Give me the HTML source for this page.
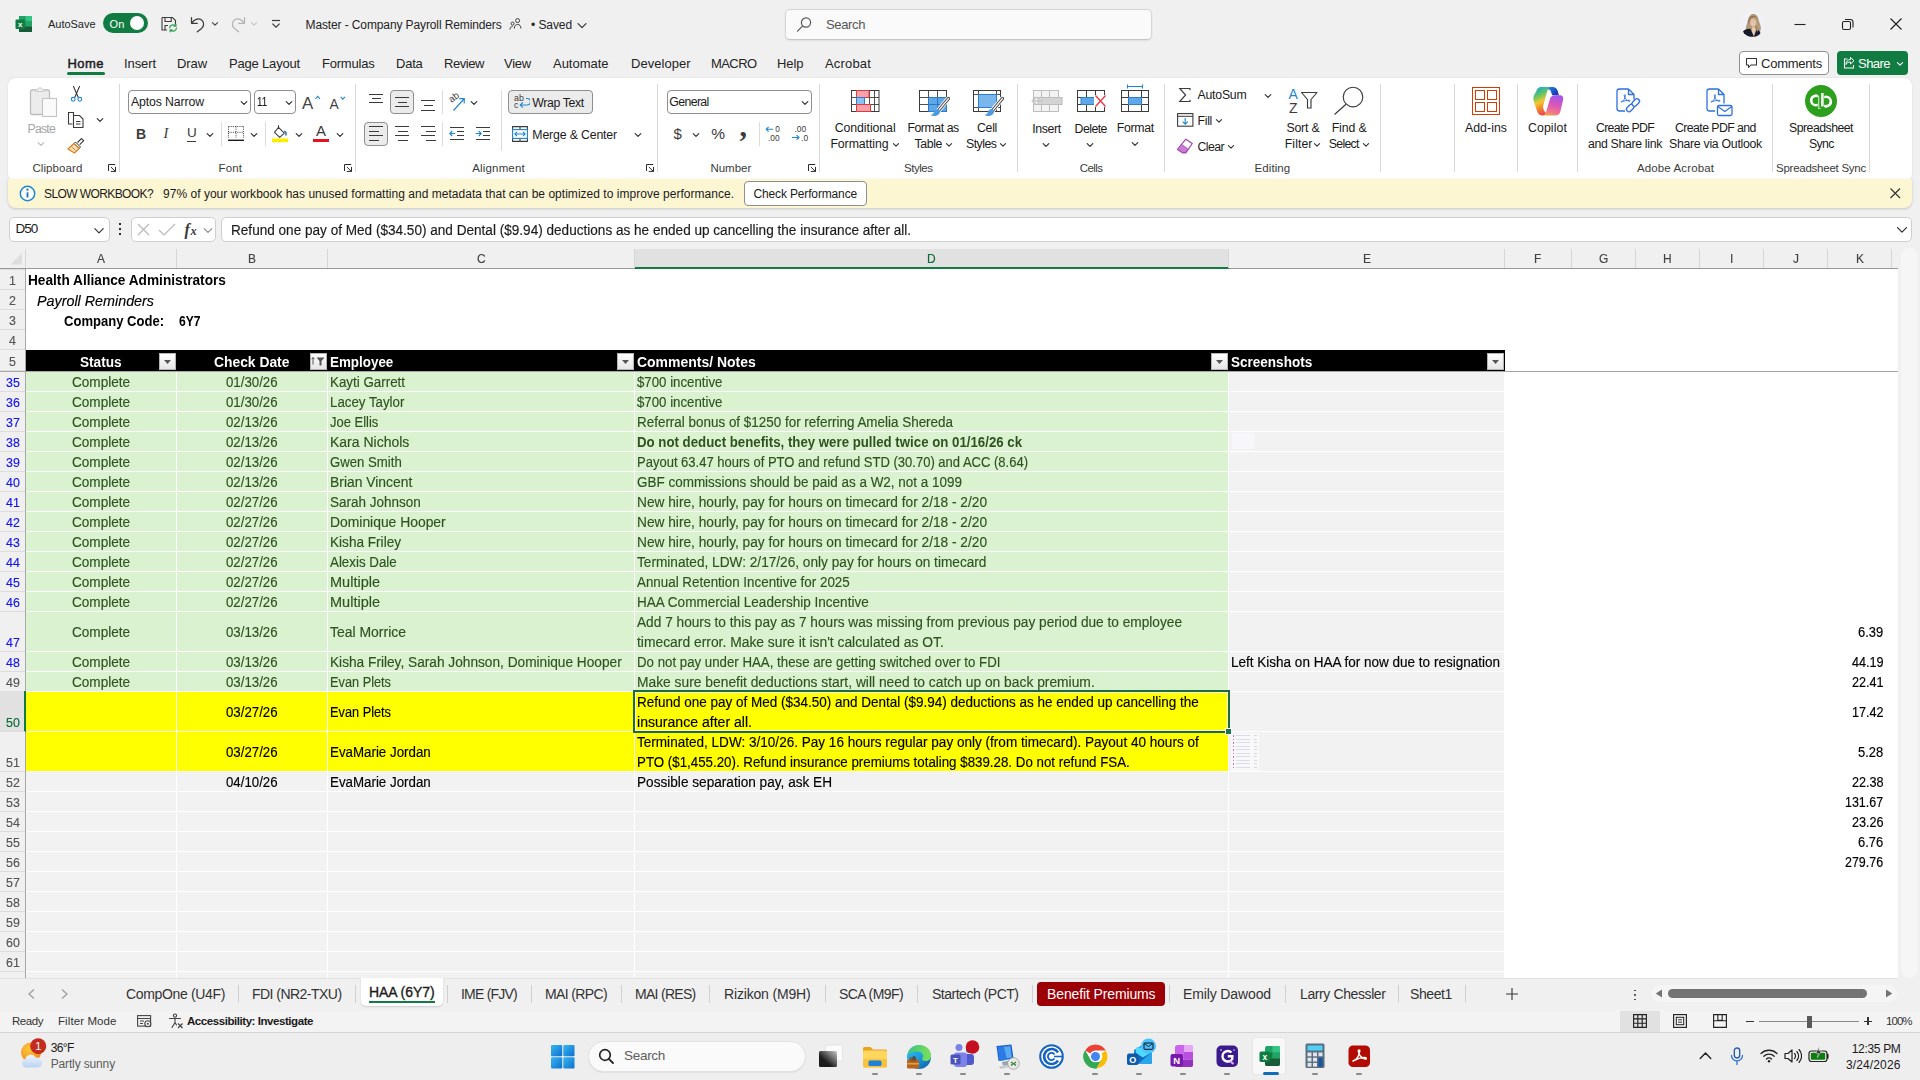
<!DOCTYPE html>
<html lang="en"><head><meta charset="utf-8"><title>Master - Company Payroll Reminders - Excel</title>
<style>
html,body{margin:0;padding:0}
body{width:1920px;height:1080px;position:relative;overflow:hidden;background:#f0f0f0;font-family:"Liberation Sans",sans-serif;color:#242424;font-size:12px}
.t{position:absolute;white-space:pre;display:block}
.r{position:absolute;box-sizing:border-box;display:block}
</style></head><body>
<div class="r" style="left:0px;top:249px;width:1898px;height:729px;background:#ffffff;"></div>
<div class="r" style="left:1898px;top:249px;width:22px;height:729px;background:#f0f0f0;"></div>
<div class="r" style="left:1901px;top:248px;width:17px;height:730px;background:#f6f6f6;border-radius:8.5px;"></div>
<div class="r" style="left:0px;top:249px;width:1898px;height:20px;background:#f0f0f0;border-bottom:1px solid #9a9a9a;"></div>
<div class="r" style="left:635px;top:249px;width:594px;height:20px;background:#e1e1e1;border-bottom:2px solid #107c41;"></div>
<span class="t" style="left:97.01px;top:250.20px;font-size:13.3px;line-height:17px;transform:scaleX(0.9000);transform-origin:0 0;-webkit-text-stroke:0.16px;color:#444;">A</span>
<div class="r" style="left:176px;top:249px;width:1px;height:19px;background:#d6d6d6;"></div>
<span class="t" style="left:248.01px;top:250.20px;font-size:13.3px;line-height:17px;transform:scaleX(0.9000);transform-origin:0 0;-webkit-text-stroke:0.16px;color:#444;">B</span>
<div class="r" style="left:327px;top:249px;width:1px;height:19px;background:#d6d6d6;"></div>
<span class="t" style="left:476.68px;top:250.20px;font-size:13.3px;line-height:17px;transform:scaleX(0.9000);transform-origin:0 0;-webkit-text-stroke:0.16px;color:#444;">C</span>
<div class="r" style="left:634px;top:249px;width:1px;height:19px;background:#d6d6d6;"></div>
<span class="t" style="left:927.18px;top:250.20px;font-size:13.3px;line-height:17px;transform:scaleX(0.9000);transform-origin:0 0;-webkit-text-stroke:0.16px;color:#0e6b38;">D</span>
<div class="r" style="left:1228px;top:249px;width:1px;height:19px;background:#d6d6d6;"></div>
<span class="t" style="left:1362.51px;top:250.20px;font-size:13.3px;line-height:17px;transform:scaleX(0.9000);transform-origin:0 0;-webkit-text-stroke:0.16px;color:#444;">E</span>
<div class="r" style="left:1504px;top:249px;width:1px;height:19px;background:#d6d6d6;"></div>
<span class="t" style="left:1534.34px;top:250.20px;font-size:13.3px;line-height:17px;transform:scaleX(0.9000);transform-origin:0 0;-webkit-text-stroke:0.16px;color:#444;">F</span>
<div class="r" style="left:1571px;top:249px;width:1px;height:19px;background:#d6d6d6;"></div>
<span class="t" style="left:1598.84px;top:250.20px;font-size:13.3px;line-height:17px;transform:scaleX(0.9000);transform-origin:0 0;-webkit-text-stroke:0.16px;color:#444;">G</span>
<div class="r" style="left:1635px;top:249px;width:1px;height:19px;background:#d6d6d6;"></div>
<span class="t" style="left:1663.18px;top:250.20px;font-size:13.3px;line-height:17px;transform:scaleX(0.9000);transform-origin:0 0;-webkit-text-stroke:0.16px;color:#444;">H</span>
<div class="r" style="left:1699px;top:249px;width:1px;height:19px;background:#d6d6d6;"></div>
<span class="t" style="left:1729.84px;top:250.20px;font-size:13.3px;line-height:17px;transform:scaleX(0.9000);transform-origin:0 0;-webkit-text-stroke:0.16px;color:#444;">I</span>
<div class="r" style="left:1763px;top:249px;width:1px;height:19px;background:#d6d6d6;"></div>
<span class="t" style="left:1792.51px;top:250.20px;font-size:13.3px;line-height:17px;transform:scaleX(0.9000);transform-origin:0 0;-webkit-text-stroke:0.16px;color:#444;">J</span>
<div class="r" style="left:1827px;top:249px;width:1px;height:19px;background:#d6d6d6;"></div>
<span class="t" style="left:1855.51px;top:250.20px;font-size:13.3px;line-height:17px;transform:scaleX(0.9000);transform-origin:0 0;-webkit-text-stroke:0.16px;color:#444;">K</span>
<div class="r" style="left:1891px;top:249px;width:1px;height:19px;background:#d6d6d6;"></div>
<div class="r" style="left:25px;top:249px;width:1px;height:19px;background:#d6d6d6;"></div>
<svg class="r" style="left:10px;top:253px;" width="13" height="12" viewBox="0 0 13 12"><path d="M12 0 L12 11.500 L0.700 11.500 Z" fill="#dedede"/></svg>
<div class="r" style="left:0px;top:269px;width:26px;height:709px;background:#f0f0f0;border-right:1px solid #a8a8a8;"></div>
<div class="r" style="left:26px;top:372px;width:1479px;height:606px;background:#f2f2f2;"></div>
<div class="r" style="left:26px;top:372px;width:1203px;height:320px;background:#daf2d0;"></div>
<div class="r" style="left:26px;top:692px;width:1203px;height:80px;background:#ffff00;"></div>
<div class="r" style="left:176px;top:372px;width:1px;height:606px;background:#ffffff;"></div>
<div class="r" style="left:327px;top:372px;width:1px;height:606px;background:#ffffff;"></div>
<div class="r" style="left:634px;top:372px;width:1px;height:606px;background:#ffffff;"></div>
<div class="r" style="left:1228px;top:372px;width:1px;height:606px;background:#ffffff;"></div>
<div class="r" style="left:1504px;top:372px;width:1px;height:606px;background:#ffffff;"></div>
<div class="r" style="left:26px;top:391px;width:1479px;height:1px;background:#ffffff;"></div>
<div class="r" style="left:26px;top:411px;width:1479px;height:1px;background:#ffffff;"></div>
<div class="r" style="left:26px;top:431px;width:1479px;height:1px;background:#ffffff;"></div>
<div class="r" style="left:26px;top:451px;width:1479px;height:1px;background:#ffffff;"></div>
<div class="r" style="left:26px;top:471px;width:1479px;height:1px;background:#ffffff;"></div>
<div class="r" style="left:26px;top:491px;width:1479px;height:1px;background:#ffffff;"></div>
<div class="r" style="left:26px;top:511px;width:1479px;height:1px;background:#ffffff;"></div>
<div class="r" style="left:26px;top:531px;width:1479px;height:1px;background:#ffffff;"></div>
<div class="r" style="left:26px;top:551px;width:1479px;height:1px;background:#ffffff;"></div>
<div class="r" style="left:26px;top:571px;width:1479px;height:1px;background:#ffffff;"></div>
<div class="r" style="left:26px;top:591px;width:1479px;height:1px;background:#ffffff;"></div>
<div class="r" style="left:26px;top:611px;width:1479px;height:1px;background:#ffffff;"></div>
<div class="r" style="left:26px;top:651px;width:1479px;height:1px;background:#ffffff;"></div>
<div class="r" style="left:26px;top:671px;width:1479px;height:1px;background:#ffffff;"></div>
<div class="r" style="left:26px;top:691px;width:1479px;height:1px;background:#ffffff;"></div>
<div class="r" style="left:26px;top:731px;width:1479px;height:1px;background:#ffffff;"></div>
<div class="r" style="left:26px;top:771px;width:1479px;height:1px;background:#ffffff;"></div>
<div class="r" style="left:26px;top:791px;width:1479px;height:1px;background:#ffffff;"></div>
<div class="r" style="left:26px;top:811px;width:1479px;height:1px;background:#ffffff;"></div>
<div class="r" style="left:26px;top:831px;width:1479px;height:1px;background:#ffffff;"></div>
<div class="r" style="left:26px;top:851px;width:1479px;height:1px;background:#ffffff;"></div>
<div class="r" style="left:26px;top:871px;width:1479px;height:1px;background:#ffffff;"></div>
<div class="r" style="left:26px;top:891px;width:1479px;height:1px;background:#ffffff;"></div>
<div class="r" style="left:26px;top:911px;width:1479px;height:1px;background:#ffffff;"></div>
<div class="r" style="left:26px;top:931px;width:1479px;height:1px;background:#ffffff;"></div>
<div class="r" style="left:26px;top:951px;width:1479px;height:1px;background:#ffffff;"></div>
<div class="r" style="left:26px;top:971px;width:1479px;height:1px;background:#ffffff;"></div>
<div class="r" style="left:26px;top:350px;width:1479px;height:21px;background:#000000;"></div>
<div class="r" style="left:0px;top:371px;width:1898px;height:1px;background:#a6a6a6;"></div>
<span class="t" style="left:9.05px;top:271.60px;font-size:12.8px;line-height:17px;transform:scaleX(0.9700);transform-origin:0 0;-webkit-text-stroke:0.16px;color:#555;">1</span>
<div class="r" style="left:0px;top:289px;width:25px;height:1px;background:#dcdcdc;"></div>
<span class="t" style="left:9.05px;top:291.60px;font-size:12.8px;line-height:17px;transform:scaleX(0.9700);transform-origin:0 0;-webkit-text-stroke:0.16px;color:#555;">2</span>
<div class="r" style="left:0px;top:309px;width:25px;height:1px;background:#dcdcdc;"></div>
<span class="t" style="left:9.05px;top:311.60px;font-size:12.8px;line-height:17px;transform:scaleX(0.9700);transform-origin:0 0;-webkit-text-stroke:0.16px;color:#555;">3</span>
<div class="r" style="left:0px;top:329px;width:25px;height:1px;background:#dcdcdc;"></div>
<span class="t" style="left:9.05px;top:331.60px;font-size:12.8px;line-height:17px;transform:scaleX(0.9700);transform-origin:0 0;-webkit-text-stroke:0.16px;color:#555;">4</span>
<div class="r" style="left:0px;top:349px;width:25px;height:1px;background:#dcdcdc;"></div>
<span class="t" style="left:9.05px;top:352.60px;font-size:12.8px;line-height:17px;transform:scaleX(0.9700);transform-origin:0 0;-webkit-text-stroke:0.16px;color:#555;">5</span>
<div class="r" style="left:0px;top:370px;width:25px;height:1px;background:#dcdcdc;"></div>
<span class="t" style="left:5.60px;top:373.60px;font-size:12.8px;line-height:17px;transform:scaleX(0.9700);transform-origin:0 0;-webkit-text-stroke:0.16px;color:#1414f0;">35</span>
<div class="r" style="left:0px;top:391px;width:25px;height:1px;background:#dcdcdc;"></div>
<span class="t" style="left:5.60px;top:393.60px;font-size:12.8px;line-height:17px;transform:scaleX(0.9700);transform-origin:0 0;-webkit-text-stroke:0.16px;color:#1414f0;">36</span>
<div class="r" style="left:0px;top:411px;width:25px;height:1px;background:#dcdcdc;"></div>
<span class="t" style="left:5.60px;top:413.60px;font-size:12.8px;line-height:17px;transform:scaleX(0.9700);transform-origin:0 0;-webkit-text-stroke:0.16px;color:#1414f0;">37</span>
<div class="r" style="left:0px;top:431px;width:25px;height:1px;background:#dcdcdc;"></div>
<span class="t" style="left:5.60px;top:433.60px;font-size:12.8px;line-height:17px;transform:scaleX(0.9700);transform-origin:0 0;-webkit-text-stroke:0.16px;color:#1414f0;">38</span>
<div class="r" style="left:0px;top:451px;width:25px;height:1px;background:#dcdcdc;"></div>
<span class="t" style="left:5.60px;top:453.60px;font-size:12.8px;line-height:17px;transform:scaleX(0.9700);transform-origin:0 0;-webkit-text-stroke:0.16px;color:#1414f0;">39</span>
<div class="r" style="left:0px;top:471px;width:25px;height:1px;background:#dcdcdc;"></div>
<span class="t" style="left:5.60px;top:473.60px;font-size:12.8px;line-height:17px;transform:scaleX(0.9700);transform-origin:0 0;-webkit-text-stroke:0.16px;color:#1414f0;">40</span>
<div class="r" style="left:0px;top:491px;width:25px;height:1px;background:#dcdcdc;"></div>
<span class="t" style="left:5.60px;top:493.60px;font-size:12.8px;line-height:17px;transform:scaleX(0.9700);transform-origin:0 0;-webkit-text-stroke:0.16px;color:#1414f0;">41</span>
<div class="r" style="left:0px;top:511px;width:25px;height:1px;background:#dcdcdc;"></div>
<span class="t" style="left:5.60px;top:513.60px;font-size:12.8px;line-height:17px;transform:scaleX(0.9700);transform-origin:0 0;-webkit-text-stroke:0.16px;color:#1414f0;">42</span>
<div class="r" style="left:0px;top:531px;width:25px;height:1px;background:#dcdcdc;"></div>
<span class="t" style="left:5.60px;top:533.60px;font-size:12.8px;line-height:17px;transform:scaleX(0.9700);transform-origin:0 0;-webkit-text-stroke:0.16px;color:#1414f0;">43</span>
<div class="r" style="left:0px;top:551px;width:25px;height:1px;background:#dcdcdc;"></div>
<span class="t" style="left:5.60px;top:553.60px;font-size:12.8px;line-height:17px;transform:scaleX(0.9700);transform-origin:0 0;-webkit-text-stroke:0.16px;color:#1414f0;">44</span>
<div class="r" style="left:0px;top:571px;width:25px;height:1px;background:#dcdcdc;"></div>
<span class="t" style="left:5.60px;top:573.60px;font-size:12.8px;line-height:17px;transform:scaleX(0.9700);transform-origin:0 0;-webkit-text-stroke:0.16px;color:#1414f0;">45</span>
<div class="r" style="left:0px;top:591px;width:25px;height:1px;background:#dcdcdc;"></div>
<span class="t" style="left:5.60px;top:593.60px;font-size:12.8px;line-height:17px;transform:scaleX(0.9700);transform-origin:0 0;-webkit-text-stroke:0.16px;color:#1414f0;">46</span>
<div class="r" style="left:0px;top:611px;width:25px;height:1px;background:#dcdcdc;"></div>
<span class="t" style="left:5.60px;top:633.60px;font-size:12.8px;line-height:17px;transform:scaleX(0.9700);transform-origin:0 0;-webkit-text-stroke:0.16px;color:#1414f0;">47</span>
<div class="r" style="left:0px;top:651px;width:25px;height:1px;background:#dcdcdc;"></div>
<span class="t" style="left:5.60px;top:653.60px;font-size:12.8px;line-height:17px;transform:scaleX(0.9700);transform-origin:0 0;-webkit-text-stroke:0.16px;color:#1414f0;">48</span>
<div class="r" style="left:0px;top:671px;width:25px;height:1px;background:#dcdcdc;"></div>
<span class="t" style="left:5.60px;top:673.60px;font-size:12.8px;line-height:17px;transform:scaleX(0.9700);transform-origin:0 0;-webkit-text-stroke:0.16px;color:#555;">49</span>
<div class="r" style="left:0px;top:691px;width:25px;height:1px;background:#dcdcdc;"></div>
<div class="r" style="left:0px;top:691px;width:26px;height:41px;background:#e1e1e1;border-right:2px solid #107c41;"></div>
<span class="t" style="left:5.60px;top:713.60px;font-size:12.8px;line-height:17px;transform:scaleX(0.9700);transform-origin:0 0;-webkit-text-stroke:0.16px;color:#0e6b38;">50</span>
<div class="r" style="left:0px;top:731px;width:25px;height:1px;background:#dcdcdc;"></div>
<span class="t" style="left:5.60px;top:753.60px;font-size:12.8px;line-height:17px;transform:scaleX(0.9700);transform-origin:0 0;-webkit-text-stroke:0.16px;color:#555;">51</span>
<div class="r" style="left:0px;top:771px;width:25px;height:1px;background:#dcdcdc;"></div>
<span class="t" style="left:5.60px;top:773.60px;font-size:12.8px;line-height:17px;transform:scaleX(0.9700);transform-origin:0 0;-webkit-text-stroke:0.16px;color:#555;">52</span>
<div class="r" style="left:0px;top:791px;width:25px;height:1px;background:#dcdcdc;"></div>
<span class="t" style="left:5.60px;top:793.60px;font-size:12.8px;line-height:17px;transform:scaleX(0.9700);transform-origin:0 0;-webkit-text-stroke:0.16px;color:#555;">53</span>
<div class="r" style="left:0px;top:811px;width:25px;height:1px;background:#dcdcdc;"></div>
<span class="t" style="left:5.60px;top:813.60px;font-size:12.8px;line-height:17px;transform:scaleX(0.9700);transform-origin:0 0;-webkit-text-stroke:0.16px;color:#555;">54</span>
<div class="r" style="left:0px;top:831px;width:25px;height:1px;background:#dcdcdc;"></div>
<span class="t" style="left:5.60px;top:833.60px;font-size:12.8px;line-height:17px;transform:scaleX(0.9700);transform-origin:0 0;-webkit-text-stroke:0.16px;color:#555;">55</span>
<div class="r" style="left:0px;top:851px;width:25px;height:1px;background:#dcdcdc;"></div>
<span class="t" style="left:5.60px;top:853.60px;font-size:12.8px;line-height:17px;transform:scaleX(0.9700);transform-origin:0 0;-webkit-text-stroke:0.16px;color:#555;">56</span>
<div class="r" style="left:0px;top:871px;width:25px;height:1px;background:#dcdcdc;"></div>
<span class="t" style="left:5.60px;top:873.60px;font-size:12.8px;line-height:17px;transform:scaleX(0.9700);transform-origin:0 0;-webkit-text-stroke:0.16px;color:#555;">57</span>
<div class="r" style="left:0px;top:891px;width:25px;height:1px;background:#dcdcdc;"></div>
<span class="t" style="left:5.60px;top:893.60px;font-size:12.8px;line-height:17px;transform:scaleX(0.9700);transform-origin:0 0;-webkit-text-stroke:0.16px;color:#555;">58</span>
<div class="r" style="left:0px;top:911px;width:25px;height:1px;background:#dcdcdc;"></div>
<span class="t" style="left:5.60px;top:913.60px;font-size:12.8px;line-height:17px;transform:scaleX(0.9700);transform-origin:0 0;-webkit-text-stroke:0.16px;color:#555;">59</span>
<div class="r" style="left:0px;top:931px;width:25px;height:1px;background:#dcdcdc;"></div>
<span class="t" style="left:5.60px;top:933.60px;font-size:12.8px;line-height:17px;transform:scaleX(0.9700);transform-origin:0 0;-webkit-text-stroke:0.16px;color:#555;">60</span>
<div class="r" style="left:0px;top:951px;width:25px;height:1px;background:#dcdcdc;"></div>
<span class="t" style="left:5.60px;top:953.60px;font-size:12.8px;line-height:17px;transform:scaleX(0.9700);transform-origin:0 0;-webkit-text-stroke:0.16px;color:#555;">61</span>
<div class="r" style="left:0px;top:971px;width:25px;height:1px;background:#dcdcdc;"></div>
<div class="r" style="left:0px;top:269px;width:25px;height:1px;background:#dcdcdc;"></div>
<svg class="r" style="left:159px;top:353px;" width="17" height="17" viewBox="0 0 17 17"><defs><linearGradient id="fg" x1="0" y1="0" x2="0" y2="1"><stop offset="0" stop-color="#ffffff"/><stop offset="1" stop-color="#e4e4e4"/></linearGradient></defs><rect x="0.5" y="0.5" width="16" height="16" fill="url(#fg)" stroke="#b5b5b5"/><path d="M5 7h7l-3.5 4z" fill="#555"/></svg>
<svg class="r" style="left:310px;top:353px;" width="17" height="17" viewBox="0 0 17 17"><defs><linearGradient id="fg" x1="0" y1="0" x2="0" y2="1"><stop offset="0" stop-color="#ffffff"/><stop offset="1" stop-color="#e4e4e4"/></linearGradient></defs><rect x="0.5" y="0.5" width="16" height="16" fill="url(#fg)" stroke="#b5b5b5"/><path d="M3 4.5v7M1.6 6.2L3 4.5l1.4 1.7" stroke="#555" fill="none" stroke-width="1"/><path d="M6.5 4.5h8l-3 3.6v4.4h-2v-4.4z" fill="#555"/></svg>
<svg class="r" style="left:617px;top:353px;" width="17" height="17" viewBox="0 0 17 17"><defs><linearGradient id="fg" x1="0" y1="0" x2="0" y2="1"><stop offset="0" stop-color="#ffffff"/><stop offset="1" stop-color="#e4e4e4"/></linearGradient></defs><rect x="0.5" y="0.5" width="16" height="16" fill="url(#fg)" stroke="#b5b5b5"/><path d="M5 7h7l-3.5 4z" fill="#555"/></svg>
<svg class="r" style="left:1211px;top:353px;" width="17" height="17" viewBox="0 0 17 17"><defs><linearGradient id="fg" x1="0" y1="0" x2="0" y2="1"><stop offset="0" stop-color="#ffffff"/><stop offset="1" stop-color="#e4e4e4"/></linearGradient></defs><rect x="0.5" y="0.5" width="16" height="16" fill="url(#fg)" stroke="#b5b5b5"/><path d="M5 7h7l-3.5 4z" fill="#555"/></svg>
<svg class="r" style="left:1487px;top:353px;" width="17" height="17" viewBox="0 0 17 17"><defs><linearGradient id="fg" x1="0" y1="0" x2="0" y2="1"><stop offset="0" stop-color="#ffffff"/><stop offset="1" stop-color="#e4e4e4"/></linearGradient></defs><rect x="0.5" y="0.5" width="16" height="16" fill="url(#fg)" stroke="#b5b5b5"/><path d="M5 7h7l-3.5 4z" fill="#555"/></svg>
<span class="t" style="left:80.20px;top:352.60px;font-size:14px;line-height:18px;transform:scaleX(0.9723);transform-origin:0 0;color:#fff;font-weight:bold;">Status</span>
<span class="t" style="left:214.30px;top:352.60px;font-size:14px;line-height:18px;transform:scaleX(0.9889);transform-origin:0 0;color:#fff;font-weight:bold;">Check Date</span>
<span class="t" style="left:330.00px;top:352.60px;font-size:14px;line-height:18px;transform:scaleX(0.9571);transform-origin:0 0;color:#fff;font-weight:bold;">Employee</span>
<span class="t" style="left:637.30px;top:352.60px;font-size:14px;line-height:18px;transform:scaleX(0.9974);transform-origin:0 0;color:#fff;font-weight:bold;">Comments/ Notes</span>
<span class="t" style="left:1231.00px;top:352.60px;font-size:14px;line-height:18px;transform:scaleX(0.9663);transform-origin:0 0;color:#fff;font-weight:bold;">Screenshots</span>
<span class="t" style="left:28.10px;top:270.50px;font-size:14.5px;line-height:19px;transform:scaleX(0.9423);transform-origin:0 0;color:#000;font-weight:bold;">Health Alliance Administrators</span>
<span class="t" style="left:37.00px;top:290.50px;font-size:15.5px;line-height:20px;transform:scaleX(0.9240);transform-origin:0 0;-webkit-text-stroke:0.16px;color:#000;font-style:italic;">Payroll Reminders</span>
<span class="t" style="left:64.40px;top:312.00px;font-size:14px;line-height:18px;transform:scaleX(0.9317);transform-origin:0 0;color:#000;font-weight:bold;">Company Code:</span>
<span class="t" style="left:178.50px;top:312.00px;font-size:14px;line-height:18px;transform:scaleX(0.8631);transform-origin:0 0;color:#000;font-weight:bold;">6Y7</span>
<span class="t" style="left:71.95px;top:373.20px;font-size:14px;line-height:18px;transform:scaleX(0.9697);transform-origin:0 0;-webkit-text-stroke:0.16px;color:#2f5320;">Complete</span>
<span class="t" style="left:225.70px;top:373.20px;font-size:14px;line-height:18px;transform:scaleX(0.9470);transform-origin:0 0;-webkit-text-stroke:0.16px;color:#2f5320;">01/30/26</span>
<span class="t" style="left:330.00px;top:373.20px;font-size:14px;line-height:18px;transform:scaleX(0.9545);transform-origin:0 0;-webkit-text-stroke:0.16px;color:#2f5320;">Kayti Garrett</span>
<span class="t" style="left:637.30px;top:373.20px;font-size:14px;line-height:18px;transform:scaleX(0.9459);transform-origin:0 0;-webkit-text-stroke:0.16px;color:#2f5320;">$700 incentive</span>
<span class="t" style="left:71.95px;top:393.20px;font-size:14px;line-height:18px;transform:scaleX(0.9697);transform-origin:0 0;-webkit-text-stroke:0.16px;color:#2f5320;">Complete</span>
<span class="t" style="left:225.70px;top:393.20px;font-size:14px;line-height:18px;transform:scaleX(0.9470);transform-origin:0 0;-webkit-text-stroke:0.16px;color:#2f5320;">01/30/26</span>
<span class="t" style="left:330.00px;top:393.20px;font-size:14px;line-height:18px;transform:scaleX(0.9485);transform-origin:0 0;-webkit-text-stroke:0.16px;color:#2f5320;">Lacey Taylor</span>
<span class="t" style="left:637.30px;top:393.20px;font-size:14px;line-height:18px;transform:scaleX(0.9459);transform-origin:0 0;-webkit-text-stroke:0.16px;color:#2f5320;">$700 incentive</span>
<span class="t" style="left:71.95px;top:413.20px;font-size:14px;line-height:18px;transform:scaleX(0.9697);transform-origin:0 0;-webkit-text-stroke:0.16px;color:#2f5320;">Complete</span>
<span class="t" style="left:225.70px;top:413.20px;font-size:14px;line-height:18px;transform:scaleX(0.9470);transform-origin:0 0;-webkit-text-stroke:0.16px;color:#2f5320;">02/13/26</span>
<span class="t" style="left:330.00px;top:413.20px;font-size:14px;line-height:18px;transform:scaleX(0.9265);transform-origin:0 0;-webkit-text-stroke:0.16px;color:#2f5320;">Joe Ellis</span>
<span class="t" style="left:637.30px;top:413.20px;font-size:14px;line-height:18px;transform:scaleX(0.9600);transform-origin:0 0;-webkit-text-stroke:0.16px;color:#2f5320;">Referral bonus of $1250 for referring Amelia Shereda</span>
<span class="t" style="left:71.95px;top:433.20px;font-size:14px;line-height:18px;transform:scaleX(0.9697);transform-origin:0 0;-webkit-text-stroke:0.16px;color:#2f5320;">Complete</span>
<span class="t" style="left:225.70px;top:433.20px;font-size:14px;line-height:18px;transform:scaleX(0.9470);transform-origin:0 0;-webkit-text-stroke:0.16px;color:#2f5320;">02/13/26</span>
<span class="t" style="left:330.00px;top:433.20px;font-size:14px;line-height:18px;transform:scaleX(0.9992);transform-origin:0 0;-webkit-text-stroke:0.16px;color:#2f5320;">Kara Nichols</span>
<span class="t" style="left:637.30px;top:433.20px;font-size:14px;line-height:18px;transform:scaleX(0.9463);transform-origin:0 0;color:#2f5320;font-weight:bold;">Do not deduct benefits, they were pulled twice on 01/16/26 ck</span>
<span class="t" style="left:71.95px;top:453.20px;font-size:14px;line-height:18px;transform:scaleX(0.9697);transform-origin:0 0;-webkit-text-stroke:0.16px;color:#2f5320;">Complete</span>
<span class="t" style="left:225.70px;top:453.20px;font-size:14px;line-height:18px;transform:scaleX(0.9470);transform-origin:0 0;-webkit-text-stroke:0.16px;color:#2f5320;">02/13/26</span>
<span class="t" style="left:330.00px;top:453.20px;font-size:14px;line-height:18px;transform:scaleX(0.9404);transform-origin:0 0;-webkit-text-stroke:0.16px;color:#2f5320;">Gwen Smith</span>
<span class="t" style="left:637.30px;top:453.20px;font-size:14px;line-height:18px;transform:scaleX(0.9293);transform-origin:0 0;-webkit-text-stroke:0.16px;color:#2f5320;">Payout 63.47 hours of PTO and refund STD (30.70) and ACC (8.64)</span>
<span class="t" style="left:71.95px;top:473.20px;font-size:14px;line-height:18px;transform:scaleX(0.9697);transform-origin:0 0;-webkit-text-stroke:0.16px;color:#2f5320;">Complete</span>
<span class="t" style="left:225.70px;top:473.20px;font-size:14px;line-height:18px;transform:scaleX(0.9470);transform-origin:0 0;-webkit-text-stroke:0.16px;color:#2f5320;">02/13/26</span>
<span class="t" style="left:330.00px;top:473.20px;font-size:14px;line-height:18px;transform:scaleX(0.9914);transform-origin:0 0;-webkit-text-stroke:0.16px;color:#2f5320;">Brian Vincent</span>
<span class="t" style="left:637.30px;top:473.20px;font-size:14px;line-height:18px;transform:scaleX(0.9624);transform-origin:0 0;-webkit-text-stroke:0.16px;color:#2f5320;">GBF commissions should be paid as a W2, not a 1099</span>
<span class="t" style="left:71.95px;top:493.20px;font-size:14px;line-height:18px;transform:scaleX(0.9697);transform-origin:0 0;-webkit-text-stroke:0.16px;color:#2f5320;">Complete</span>
<span class="t" style="left:225.70px;top:493.20px;font-size:14px;line-height:18px;transform:scaleX(0.9470);transform-origin:0 0;-webkit-text-stroke:0.16px;color:#2f5320;">02/27/26</span>
<span class="t" style="left:330.00px;top:493.20px;font-size:14px;line-height:18px;transform:scaleX(0.9631);transform-origin:0 0;-webkit-text-stroke:0.16px;color:#2f5320;">Sarah Johnson</span>
<span class="t" style="left:637.30px;top:493.20px;font-size:14px;line-height:18px;transform:scaleX(0.9786);transform-origin:0 0;-webkit-text-stroke:0.16px;color:#2f5320;">New hire, hourly, pay for hours on timecard for 2/18 - 2/20</span>
<span class="t" style="left:71.95px;top:513.20px;font-size:14px;line-height:18px;transform:scaleX(0.9697);transform-origin:0 0;-webkit-text-stroke:0.16px;color:#2f5320;">Complete</span>
<span class="t" style="left:225.70px;top:513.20px;font-size:14px;line-height:18px;transform:scaleX(0.9470);transform-origin:0 0;-webkit-text-stroke:0.16px;color:#2f5320;">02/27/26</span>
<span class="t" style="left:330.00px;top:513.20px;font-size:14px;line-height:18px;transform:scaleX(0.9912);transform-origin:0 0;-webkit-text-stroke:0.16px;color:#2f5320;">Dominique Hooper</span>
<span class="t" style="left:637.30px;top:513.20px;font-size:14px;line-height:18px;transform:scaleX(0.9786);transform-origin:0 0;-webkit-text-stroke:0.16px;color:#2f5320;">New hire, hourly, pay for hours on timecard for 2/18 - 2/20</span>
<span class="t" style="left:71.95px;top:533.20px;font-size:14px;line-height:18px;transform:scaleX(0.9697);transform-origin:0 0;-webkit-text-stroke:0.16px;color:#2f5320;">Complete</span>
<span class="t" style="left:225.70px;top:533.20px;font-size:14px;line-height:18px;transform:scaleX(0.9470);transform-origin:0 0;-webkit-text-stroke:0.16px;color:#2f5320;">02/27/26</span>
<span class="t" style="left:330.00px;top:533.20px;font-size:14px;line-height:18px;transform:scaleX(0.9709);transform-origin:0 0;-webkit-text-stroke:0.16px;color:#2f5320;">Kisha Friley</span>
<span class="t" style="left:637.30px;top:533.20px;font-size:14px;line-height:18px;transform:scaleX(0.9786);transform-origin:0 0;-webkit-text-stroke:0.16px;color:#2f5320;">New hire, hourly, pay for hours on timecard for 2/18 - 2/20</span>
<span class="t" style="left:71.95px;top:553.20px;font-size:14px;line-height:18px;transform:scaleX(0.9697);transform-origin:0 0;-webkit-text-stroke:0.16px;color:#2f5320;">Complete</span>
<span class="t" style="left:225.70px;top:553.20px;font-size:14px;line-height:18px;transform:scaleX(0.9470);transform-origin:0 0;-webkit-text-stroke:0.16px;color:#2f5320;">02/27/26</span>
<span class="t" style="left:330.00px;top:553.20px;font-size:14px;line-height:18px;transform:scaleX(0.9525);transform-origin:0 0;-webkit-text-stroke:0.16px;color:#2f5320;">Alexis Dale</span>
<span class="t" style="left:637.30px;top:553.20px;font-size:14px;line-height:18px;transform:scaleX(0.9748);transform-origin:0 0;-webkit-text-stroke:0.16px;color:#2f5320;">Terminated, LDW: 2/17/26, only pay for hours on timecard</span>
<span class="t" style="left:71.95px;top:573.20px;font-size:14px;line-height:18px;transform:scaleX(0.9697);transform-origin:0 0;-webkit-text-stroke:0.16px;color:#2f5320;">Complete</span>
<span class="t" style="left:225.70px;top:573.20px;font-size:14px;line-height:18px;transform:scaleX(0.9470);transform-origin:0 0;-webkit-text-stroke:0.16px;color:#2f5320;">02/27/26</span>
<span class="t" style="left:330.00px;top:573.20px;font-size:14px;line-height:18px;transform:scaleX(1.0365);transform-origin:0 0;-webkit-text-stroke:0.16px;color:#2f5320;">Multiple</span>
<span class="t" style="left:637.30px;top:573.20px;font-size:14px;line-height:18px;transform:scaleX(0.9556);transform-origin:0 0;-webkit-text-stroke:0.16px;color:#2f5320;">Annual Retention Incentive for 2025</span>
<span class="t" style="left:71.95px;top:593.20px;font-size:14px;line-height:18px;transform:scaleX(0.9697);transform-origin:0 0;-webkit-text-stroke:0.16px;color:#2f5320;">Complete</span>
<span class="t" style="left:225.70px;top:593.20px;font-size:14px;line-height:18px;transform:scaleX(0.9470);transform-origin:0 0;-webkit-text-stroke:0.16px;color:#2f5320;">02/27/26</span>
<span class="t" style="left:330.00px;top:593.20px;font-size:14px;line-height:18px;transform:scaleX(1.0365);transform-origin:0 0;-webkit-text-stroke:0.16px;color:#2f5320;">Multiple</span>
<span class="t" style="left:637.30px;top:593.20px;font-size:14px;line-height:18px;transform:scaleX(0.9668);transform-origin:0 0;-webkit-text-stroke:0.16px;color:#2f5320;">HAA Commercial Leadership Incentive</span>
<span class="t" style="left:71.95px;top:623.20px;font-size:14px;line-height:18px;transform:scaleX(0.9697);transform-origin:0 0;-webkit-text-stroke:0.16px;color:#2f5320;">Complete</span>
<span class="t" style="left:225.70px;top:623.20px;font-size:14px;line-height:18px;transform:scaleX(0.9470);transform-origin:0 0;-webkit-text-stroke:0.16px;color:#2f5320;">03/13/26</span>
<span class="t" style="left:330.00px;top:623.20px;font-size:14px;line-height:18px;transform:scaleX(0.9969);transform-origin:0 0;-webkit-text-stroke:0.16px;color:#2f5320;">Teal Morrice</span>
<span class="t" style="left:637.30px;top:613.20px;font-size:14px;line-height:18px;transform:scaleX(0.9768);transform-origin:0 0;-webkit-text-stroke:0.16px;color:#2f5320;">Add 7 hours to this pay as 7 hours was missing from previous pay period due to employee</span>
<span class="t" style="left:637.30px;top:633.20px;font-size:14px;line-height:18px;transform:scaleX(0.9894);transform-origin:0 0;-webkit-text-stroke:0.16px;color:#2f5320;">timecard error. Make sure it isn&#x27;t calculated as OT.</span>
<span class="t" style="left:71.95px;top:653.20px;font-size:14px;line-height:18px;transform:scaleX(0.9697);transform-origin:0 0;-webkit-text-stroke:0.16px;color:#2f5320;">Complete</span>
<span class="t" style="left:225.70px;top:653.20px;font-size:14px;line-height:18px;transform:scaleX(0.9470);transform-origin:0 0;-webkit-text-stroke:0.16px;color:#2f5320;">03/13/26</span>
<span class="t" style="left:330.00px;top:653.20px;font-size:14px;line-height:18px;transform:scaleX(0.9771);transform-origin:0 0;-webkit-text-stroke:0.16px;color:#2f5320;">Kisha Friley, Sarah Johnson, Dominique Hooper</span>
<span class="t" style="left:637.30px;top:653.20px;font-size:14px;line-height:18px;transform:scaleX(0.9473);transform-origin:0 0;-webkit-text-stroke:0.16px;color:#2f5320;">Do not pay under HAA, these are getting switched over to FDI</span>
<span class="t" style="left:71.95px;top:673.20px;font-size:14px;line-height:18px;transform:scaleX(0.9697);transform-origin:0 0;-webkit-text-stroke:0.16px;color:#2f5320;">Complete</span>
<span class="t" style="left:225.70px;top:673.20px;font-size:14px;line-height:18px;transform:scaleX(0.9470);transform-origin:0 0;-webkit-text-stroke:0.16px;color:#2f5320;">03/13/26</span>
<span class="t" style="left:330.00px;top:673.20px;font-size:14px;line-height:18px;transform:scaleX(0.9115);transform-origin:0 0;-webkit-text-stroke:0.16px;color:#2f5320;">Evan Plets</span>
<span class="t" style="left:637.30px;top:673.20px;font-size:14px;line-height:18px;transform:scaleX(0.9869);transform-origin:0 0;-webkit-text-stroke:0.16px;color:#2f5320;">Make sure benefit deductions start, will need to catch up on back premium.</span>
<span class="t" style="left:225.70px;top:703.20px;font-size:14px;line-height:18px;transform:scaleX(0.9470);transform-origin:0 0;-webkit-text-stroke:0.16px;color:#000;">03/27/26</span>
<span class="t" style="left:330.00px;top:703.20px;font-size:14px;line-height:18px;transform:scaleX(0.9115);transform-origin:0 0;-webkit-text-stroke:0.16px;color:#000;">Evan Plets</span>
<span class="t" style="left:637.30px;top:693.20px;font-size:14px;line-height:18px;transform:scaleX(0.9636);transform-origin:0 0;-webkit-text-stroke:0.16px;color:#000;">Refund one pay of Med ($34.50) and Dental ($9.94) deductions as he ended up cancelling the</span>
<span class="t" style="left:637.30px;top:713.20px;font-size:14px;line-height:18px;transform:scaleX(1.0054);transform-origin:0 0;-webkit-text-stroke:0.16px;color:#000;">insurance after all.</span>
<span class="t" style="left:225.70px;top:743.20px;font-size:14px;line-height:18px;transform:scaleX(0.9470);transform-origin:0 0;-webkit-text-stroke:0.16px;color:#000;">03/27/26</span>
<span class="t" style="left:330.00px;top:743.20px;font-size:14px;line-height:18px;transform:scaleX(0.9516);transform-origin:0 0;-webkit-text-stroke:0.16px;color:#000;">EvaMarie Jordan</span>
<span class="t" style="left:637.30px;top:733.20px;font-size:14px;line-height:18px;transform:scaleX(0.9681);transform-origin:0 0;-webkit-text-stroke:0.16px;color:#000;">Terminated, LDW: 3/10/26. Pay 16 hours regular pay only (from timecard). Payout 40 hours of</span>
<span class="t" style="left:637.30px;top:753.20px;font-size:14px;line-height:18px;transform:scaleX(0.9512);transform-origin:0 0;-webkit-text-stroke:0.16px;color:#000;">PTO ($1,455.20). Refund insurance premiums totaling $839.28. Do not refund FSA.</span>
<span class="t" style="left:225.70px;top:773.20px;font-size:14px;line-height:18px;transform:scaleX(0.9470);transform-origin:0 0;-webkit-text-stroke:0.16px;color:#000;">04/10/26</span>
<span class="t" style="left:330.00px;top:773.20px;font-size:14px;line-height:18px;transform:scaleX(0.9516);transform-origin:0 0;-webkit-text-stroke:0.16px;color:#000;">EvaMarie Jordan</span>
<span class="t" style="left:637.30px;top:773.20px;font-size:14px;line-height:18px;transform:scaleX(0.9726);transform-origin:0 0;-webkit-text-stroke:0.16px;color:#000;">Possible separation pay, ask EH</span>
<span class="t" style="left:1231.00px;top:653.20px;font-size:14px;line-height:18px;transform:scaleX(0.9655);transform-origin:0 0;-webkit-text-stroke:0.16px;color:#000;">Left Kisha on HAA for now due to resignation</span>
<span class="t" style="left:1858.30px;top:623.20px;font-size:14px;line-height:18px;transform:scaleX(0.9249);transform-origin:0 0;-webkit-text-stroke:0.16px;color:#000;">6.39</span>
<span class="t" style="left:1851.85px;top:653.20px;font-size:14px;line-height:18px;transform:scaleX(0.9035);transform-origin:0 0;-webkit-text-stroke:0.16px;color:#000;">44.19</span>
<span class="t" style="left:1851.85px;top:673.20px;font-size:14px;line-height:18px;transform:scaleX(0.9035);transform-origin:0 0;-webkit-text-stroke:0.16px;color:#000;">22.41</span>
<span class="t" style="left:1851.85px;top:703.20px;font-size:14px;line-height:18px;transform:scaleX(0.9035);transform-origin:0 0;-webkit-text-stroke:0.16px;color:#000;">17.42</span>
<span class="t" style="left:1858.30px;top:743.20px;font-size:14px;line-height:18px;transform:scaleX(0.9249);transform-origin:0 0;-webkit-text-stroke:0.16px;color:#000;">5.28</span>
<span class="t" style="left:1851.85px;top:773.20px;font-size:14px;line-height:18px;transform:scaleX(0.9035);transform-origin:0 0;-webkit-text-stroke:0.16px;color:#000;">22.38</span>
<span class="t" style="left:1845.40px;top:793.20px;font-size:14px;line-height:18px;transform:scaleX(0.8899);transform-origin:0 0;-webkit-text-stroke:0.16px;color:#000;">131.67</span>
<span class="t" style="left:1851.85px;top:813.20px;font-size:14px;line-height:18px;transform:scaleX(0.9035);transform-origin:0 0;-webkit-text-stroke:0.16px;color:#000;">23.26</span>
<span class="t" style="left:1858.30px;top:833.20px;font-size:14px;line-height:18px;transform:scaleX(0.9249);transform-origin:0 0;-webkit-text-stroke:0.16px;color:#000;">6.76</span>
<span class="t" style="left:1845.40px;top:853.20px;font-size:14px;line-height:18px;transform:scaleX(0.8899);transform-origin:0 0;-webkit-text-stroke:0.16px;color:#000;">279.76</span>
<div class="r" style="left:633px;top:690px;width:597px;height:43px;border:2px solid #1a6b40;box-shadow:inset 0 0 0 1px rgba(255,255,255,.85);"></div>
<div class="r" style="left:1225px;top:728px;width:7px;height:7px;background:#1f7346;border:1px solid #fff;"></div>
<div class="r" style="left:1232px;top:433px;width:22px;height:16px;background:#f7f6fb;opacity:.9;"></div>
<div class="r" style="left:1231px;top:733px;width:28px;height:38px;background:#f8f7f9;"></div>
<div class="r" style="left:1232.5px;top:735.0px;width:1.5px;height:1.6px;background:#b779c9;"></div>
<div class="r" style="left:1236px;top:735.2px;width:14px;height:1.2px;background:#dcdce6;"></div>
<div class="r" style="left:1254px;top:735.2px;width:3px;height:1.2px;background:#d8d8d8;"></div>
<div class="r" style="left:1232.5px;top:738.5px;width:1.5px;height:1.6px;background:#b779c9;"></div>
<div class="r" style="left:1236px;top:738.7px;width:14px;height:1.2px;background:#dcdce6;"></div>
<div class="r" style="left:1254px;top:738.7px;width:3px;height:1.2px;background:#d8d8d8;"></div>
<div class="r" style="left:1232.5px;top:742.0px;width:1.5px;height:1.6px;background:#b779c9;"></div>
<div class="r" style="left:1236px;top:742.2px;width:14px;height:1.2px;background:#dcdce6;"></div>
<div class="r" style="left:1254px;top:742.2px;width:3px;height:1.2px;background:#d8d8d8;"></div>
<div class="r" style="left:1232.5px;top:745.5px;width:1.5px;height:1.6px;background:#b779c9;"></div>
<div class="r" style="left:1236px;top:745.7px;width:14px;height:1.2px;background:#dcdce6;"></div>
<div class="r" style="left:1254px;top:745.7px;width:3px;height:1.2px;background:#d8d8d8;"></div>
<div class="r" style="left:1232.5px;top:749.0px;width:1.5px;height:1.6px;background:#b779c9;"></div>
<div class="r" style="left:1236px;top:749.2px;width:14px;height:1.2px;background:#dcdce6;"></div>
<div class="r" style="left:1254px;top:749.2px;width:3px;height:1.2px;background:#d8d8d8;"></div>
<div class="r" style="left:1232.5px;top:752.5px;width:1.5px;height:1.6px;background:#b779c9;"></div>
<div class="r" style="left:1236px;top:752.7px;width:14px;height:1.2px;background:#dcdce6;"></div>
<div class="r" style="left:1254px;top:752.7px;width:3px;height:1.2px;background:#d8d8d8;"></div>
<div class="r" style="left:1232.5px;top:756.0px;width:1.5px;height:1.6px;background:#b779c9;"></div>
<div class="r" style="left:1236px;top:756.2px;width:14px;height:1.2px;background:#dcdce6;"></div>
<div class="r" style="left:1254px;top:756.2px;width:3px;height:1.2px;background:#d8d8d8;"></div>
<div class="r" style="left:1232.5px;top:759.5px;width:1.5px;height:1.6px;background:#b779c9;"></div>
<div class="r" style="left:1236px;top:759.7px;width:14px;height:1.2px;background:#dcdce6;"></div>
<div class="r" style="left:1254px;top:759.7px;width:3px;height:1.2px;background:#d8d8d8;"></div>
<div class="r" style="left:1232.5px;top:763.0px;width:1.5px;height:1.6px;background:#b779c9;"></div>
<div class="r" style="left:1236px;top:763.2px;width:14px;height:1.2px;background:#dcdce6;"></div>
<div class="r" style="left:1254px;top:763.2px;width:3px;height:1.2px;background:#d8d8d8;"></div>
<div class="r" style="left:1232.5px;top:766.5px;width:1.5px;height:1.6px;background:#b779c9;"></div>
<div class="r" style="left:1236px;top:766.7px;width:14px;height:1.2px;background:#dcdce6;"></div>
<div class="r" style="left:1254px;top:766.7px;width:3px;height:1.2px;background:#d8d8d8;"></div>
<svg class="r" style="left:15px;top:15px;" width="18" height="18" viewBox="0 0 18 18"><rect x="4" y="1" width="13" height="16" rx="1.5" fill="#21a366"/><rect x="10.5" y="1" width="6.5" height="5.3" fill="#33c481"/><rect x="4" y="1" width="6.5" height="5.3" fill="#21a366"/><rect x="4" y="6.3" width="6.5" height="5.3" fill="#107c41"/><rect x="10.5" y="6.3" width="6.5" height="5.3" fill="#21a366"/><rect x="4" y="11.6" width="13" height="5.4" fill="#185c37"/><rect x="0.5" y="4.5" width="9.5" height="9.5" rx="1" fill="#107c41"/><text x="5.2" y="12.3" font-family="Liberation Sans,sans-serif" font-weight="bold" font-size="8" fill="#fff" text-anchor="middle">x</text></svg>
<span class="t" style="left:48.00px;top:17.20px;font-size:11px;line-height:14px;letter-spacing:-0.025px;color:#242424;">AutoSave</span>
<div class="r" style="left:103px;top:13px;width:45px;height:20px;background:#107c41;border-radius:10px;"></div>
<div class="r" style="left:130px;top:16px;width:14px;height:14px;background:#ffffff;border-radius:7px;"></div>
<span class="t" style="left:109.60px;top:17.20px;font-size:11px;line-height:14px;letter-spacing:0.014px;color:#fff;">On</span>
<svg class="r" style="left:160px;top:15px;" width="19" height="18" viewBox="0 0 19 18"><path d="M2 2.5h10.5l3 3V9.5M2 2.5v12.5h5M5 2.8v3.7h6.2V2.8M5 15v-4.5h3" fill="none" stroke="#3b3b3b" stroke-width="1.1"/><path d="M9.5 13.2a3.6 3.6 0 0 1 6.2-2.2M16.6 12.6a3.6 3.6 0 0 1-6.2 2.4M15.9 8.9v2.3h-2.3M10.2 17.2v-2.3h2.3" fill="none" stroke="#2ea44f" stroke-width="1.2"/></svg>
<svg class="r" style="left:189px;top:15px;" width="18" height="18" viewBox="0 0 18 18"><path d="M2.5 2.5v5.8h5.8M2.8 8.1C5 4.6 9.2 2.8 12.3 4.8c3 2 3 6.2.3 8.6L8.3 16.8" fill="none" stroke="#3b3b3b" stroke-width="1.25" stroke-linecap="round" stroke-linejoin="round"/></svg>
<svg class="r" style="left:209.5px;top:20px;" width="10" height="8" viewBox="0 0 10 8"><path d="M2.4 2.6 L5 5.2 L7.6 2.6" fill="none" stroke="#444" stroke-width="1.1" stroke-linecap="round" stroke-linejoin="round"/></svg>
<svg class="r" style="left:229px;top:15px;" width="18" height="18" viewBox="0 0 18 18"><path d="M15.5 2.5v5.8H9.7M15.2 8.1C13 4.6 8.8 2.8 5.7 4.8c-3 2-3 6.2-.3 8.6L9.7 16.8" fill="none" stroke="#b4b4b4" stroke-width="1.25" stroke-linecap="round" stroke-linejoin="round"/></svg>
<svg class="r" style="left:248.5px;top:20px;" width="10" height="8" viewBox="0 0 10 8"><path d="M2.4 2.6 L5 5.2 L7.6 2.6" fill="none" stroke="#c4c4c4" stroke-width="1.1" stroke-linecap="round" stroke-linejoin="round"/></svg>
<svg class="r" style="left:270px;top:19px;" width="12" height="10" viewBox="0 0 12 10"><path d="M2 1.5h8" stroke="#3b3b3b" stroke-width="1.2"/><path d="M2.4 4.6L6 8.2 9.6 4.6" fill="none" stroke="#3b3b3b" stroke-width="1.2"/></svg>
<span class="t" style="left:305.50px;top:16.60px;font-size:12px;line-height:16px;letter-spacing:-0.116px;color:#242424;">Master - Company Payroll Reminders</span>
<svg class="r" style="left:509px;top:17px;" width="14" height="14" viewBox="0 0 14 14"><circle cx="8.6" cy="3.6" r="2" fill="none" stroke="#3b3b3b" stroke-width="1"/><path d="M5.3 11.5c0-2.6 1.3-4 3.3-4s3.3 1.4 3.3 4" fill="none" stroke="#3b3b3b" stroke-width="1"/><circle cx="3.6" cy="6.6" r="1.5" fill="none" stroke="#3b3b3b" stroke-width="1"/><path d="M1 12.5c0-2 1-3 2.6-3" fill="none" stroke="#3b3b3b" stroke-width="1"/></svg>
<span class="t" style="left:531.00px;top:16.60px;font-size:12px;line-height:16px;letter-spacing:-0.080px;color:#242424;">• Saved</span>
<svg class="r" style="left:577px;top:20.5px;" width="10" height="8" viewBox="0 0 10 8"><path d="M1.0 2.6 L5 6.6 L9.0 2.6" fill="none" stroke="#333" stroke-width="1.2" stroke-linecap="round" stroke-linejoin="round"/></svg>
<div class="r" style="left:784.5px;top:8.5px;width:367.5px;height:31px;background:#fafafa;border:1px solid #d6d6d6;border-bottom-color:#c4c4c4;border-radius:5px;box-shadow:0 1px 2px rgba(0,0,0,.08);"></div>
<svg class="r" style="left:796px;top:16px;" width="17" height="17" viewBox="0 0 17 17"><circle cx="10" cy="6.5" r="4.6" fill="none" stroke="#555" stroke-width="1.2"/><path d="M6.7 9.9L1.5 15.2" stroke="#555" stroke-width="1.2" stroke-linecap="round"/></svg>
<span class="t" style="left:826.00px;top:16.00px;font-size:13px;line-height:17px;letter-spacing:-0.365px;color:#555;">Search</span>
<svg class="r" style="left:1739.5px;top:12px;" width="25" height="25" viewBox="0 0 25 25"><defs><clipPath id="av"><circle cx="12.500" cy="12.500" r="12.300"/></clipPath><filter id="avb" x="-10%" y="-10%" width="120%" height="120%"><feGaussianBlur stdDeviation="0.55"/></filter></defs><g clip-path="url(#av)"><rect width="25" height="25" fill="#f1f2f9"/><g filter="url(#avb)"><path d="M6.500 21c-1.500-4-.5-7 .8-10C8.300 4.500 10.500 2 13.200 2c3.300 0 5 2.500 5.800 7 .5 3 2.500 5 1.700 8.500-.4 2-1.200 3.500-2.200 4.500z" fill="#b39a78"/><path d="M8.300 12c-.3-4 1.200-8 4.700-8.300 2.500 0 3.800 2 4.200 4.500-2 .2-4.500-.8-5.800-2.300-.8 2-2 4-3.100 6.100z" fill="#8b6f4e"/><ellipse cx="13.300" cy="10.500" rx="3.100" ry="4.100" fill="#e6c2ab"/><path d="M9.300 9.500c.8-3 2.500-4.300 4.300-4.300 2 0 3.300 1.500 3.600 4-1.500-.3-3.500-1.200-4.700-2.700-.8 1.300-1.900 2.400-3.200 3z" fill="#c6ab84"/><path d="M12.500 14.500l3.500 1.500-1 8.500h-4z" fill="#ecc9b4"/><path d="M3 19.500c2-2.300 5-3.300 7.500-2.500l3.700 8H5.500z" fill="#151a2b"/><path d="M16.500 17.500c1.800.3 3.300 1.500 4 3.500l-2.300 4h-4.500z" fill="#1a1f30"/><path d="M15.500 13c1.500 2 3 4 2.500 7-.8-1-2-2.500-3-3.500z" fill="#a58a66"/></g></g></svg>
<svg class="r" style="left:1793px;top:18px;" width="14" height="12" viewBox="0 0 14 12"><path d="M1.5 6.5h11" stroke="#222" stroke-width="1.1"/></svg>
<svg class="r" style="left:1841px;top:18px;" width="14" height="13" viewBox="0 0 14 13"><rect x="1.500" y="3.500" width="8" height="8" rx="1.500" fill="none" stroke="#222" stroke-width="1.1"/><path d="M4 1.500h5.500a2.500 2.500 0 0 1 2.500 2.500v5.500" fill="none" stroke="#222" stroke-width="1.1"/></svg>
<svg class="r" style="left:1889px;top:17px;" width="14" height="14" viewBox="0 0 14 14"><path d="M1.500 1.500l11 11M12.500 1.500l-11 11" stroke="#222" stroke-width="1.15"/></svg>
<span class="t" style="left:67.50px;top:55.00px;font-size:13px;line-height:17px;letter-spacing:0.456px;color:#1b1b1b;-webkit-text-stroke:0.45px #1b1b1b;">Home</span>
<div class="r" style="left:67px;top:72px;width:38px;height:3px;background:#107c41;border-radius:1.5px;"></div>
<span class="t" style="left:124.00px;top:55.00px;font-size:13px;line-height:17px;letter-spacing:-0.085px;color:#242424;">Insert</span>
<span class="t" style="left:177.00px;top:55.00px;font-size:13px;line-height:17px;letter-spacing:-0.084px;color:#242424;">Draw</span>
<span class="t" style="left:229.00px;top:55.00px;font-size:13px;line-height:17px;letter-spacing:-0.182px;color:#242424;">Page Layout</span>
<span class="t" style="left:322.00px;top:55.00px;font-size:13px;line-height:17px;letter-spacing:-0.209px;color:#242424;">Formulas</span>
<span class="t" style="left:396.00px;top:55.00px;font-size:13px;line-height:17px;letter-spacing:-0.240px;color:#242424;">Data</span>
<span class="t" style="left:444.00px;top:55.00px;font-size:13px;line-height:17px;letter-spacing:-0.437px;color:#242424;">Review</span>
<span class="t" style="left:504.00px;top:55.00px;font-size:13px;line-height:17px;letter-spacing:-0.235px;color:#242424;">View</span>
<span class="t" style="left:553.00px;top:55.00px;font-size:13px;line-height:17px;letter-spacing:-0.018px;color:#242424;">Automate</span>
<span class="t" style="left:631.00px;top:55.00px;font-size:13px;line-height:17px;letter-spacing:0.028px;color:#242424;">Developer</span>
<span class="t" style="left:711.00px;top:55.00px;font-size:13px;line-height:17px;letter-spacing:-0.578px;color:#242424;">MACRO</span>
<span class="t" style="left:777.00px;top:55.00px;font-size:13px;line-height:17px;letter-spacing:-0.059px;color:#242424;">Help</span>
<span class="t" style="left:825.00px;top:55.00px;font-size:13px;line-height:17px;letter-spacing:0.172px;color:#242424;">Acrobat</span>
<div class="r" style="left:1739px;top:51px;width:90px;height:24px;background:#ffffff;border:1px solid #8f8f8f;border-radius:4px;"></div>
<svg class="r" style="left:1745px;top:57px;" width="13" height="12" viewBox="0 0 13 12"><path d="M1.500 1.500h10v6.500H6L3.500 10.500V8H1.500z" fill="none" stroke="#333" stroke-width="1.05" stroke-linejoin="round"/></svg>
<span class="t" style="left:1761.00px;top:55.00px;font-size:13px;line-height:17px;letter-spacing:-0.231px;color:#242424;">Comments</span>
<div class="r" style="left:1837px;top:51px;width:71px;height:24px;background:#107c41;border-radius:4px;"></div>
<svg class="r" style="left:1842px;top:56px;" width="14" height="14" viewBox="0 0 14 14"><path d="M5.500 3H2.500v9h9V9" fill="none" stroke="#fff" stroke-width="1.1"/><path d="M8.500 1.500L12 4.700 8.500 8V6c-2.500 0-3.800 1-4.500 2.500C4 5.500 5.500 3.700 8.500 3.500z" fill="none" stroke="#fff" stroke-width="1" stroke-linejoin="round"/></svg>
<span class="t" style="left:1858.00px;top:55.00px;font-size:13px;line-height:17px;letter-spacing:-0.538px;color:#fff;">Share</span>
<svg class="r" style="left:1895px;top:59.5px;" width="10" height="8" viewBox="0 0 10 8"><path d="M2.4 2.6 L5 5.2 L7.6 2.6" fill="none" stroke="#fff" stroke-width="1.1" stroke-linecap="round" stroke-linejoin="round"/></svg>
<div class="r" style="left:8px;top:78px;width:1904px;height:104px;background:#ffffff;border-radius:8px;box-shadow:0 0 2px rgba(0,0,0,.10);"></div>
<div class="r" style="left:118.9px;top:84px;width:1px;height:88px;background:#d8d8d8;"></div>
<div class="r" style="left:355.0px;top:84px;width:1px;height:88px;background:#d8d8d8;"></div>
<div class="r" style="left:657.0px;top:84px;width:1px;height:88px;background:#d8d8d8;"></div>
<div class="r" style="left:819.2px;top:84px;width:1px;height:88px;background:#d8d8d8;"></div>
<div class="r" style="left:1017.2px;top:84px;width:1px;height:88px;background:#d8d8d8;"></div>
<div class="r" style="left:1164.1px;top:84px;width:1px;height:88px;background:#d8d8d8;"></div>
<div class="r" style="left:1379.9px;top:84px;width:1px;height:88px;background:#d8d8d8;"></div>
<div class="r" style="left:1454.0px;top:84px;width:1px;height:88px;background:#d8d8d8;"></div>
<div class="r" style="left:1517.0px;top:84px;width:1px;height:88px;background:#d8d8d8;"></div>
<div class="r" style="left:1577.0px;top:84px;width:1px;height:88px;background:#d8d8d8;"></div>
<div class="r" style="left:1772.0px;top:84px;width:1px;height:88px;background:#d8d8d8;"></div>
<div class="r" style="left:1869.0px;top:84px;width:1px;height:88px;background:#d8d8d8;"></div>
<span class="t" style="left:32.40px;top:160.50px;font-size:11.5px;line-height:15px;letter-spacing:0.098px;color:#3b3b3b;">Clipboard</span>
<svg class="r" style="left:108px;top:164px;" width="9" height="9" viewBox="0 0 9 9"><path d="M0.500 6.600V0.500H6.800M3.200 3.300L7.300 7.300M3.200 7.400H7.500V3.300" fill="none" stroke="#2b2b2b" stroke-width="1" stroke-linecap="round"/></svg>
<span class="t" style="left:218.50px;top:160.50px;font-size:11.5px;line-height:15px;letter-spacing:0.123px;color:#3b3b3b;">Font</span>
<svg class="r" style="left:344px;top:164px;" width="9" height="9" viewBox="0 0 9 9"><path d="M0.500 6.600V0.500H6.800M3.200 3.300L7.300 7.300M3.200 7.400H7.500V3.300" fill="none" stroke="#2b2b2b" stroke-width="1" stroke-linecap="round"/></svg>
<span class="t" style="left:472.30px;top:160.50px;font-size:11.5px;line-height:15px;letter-spacing:0.152px;color:#3b3b3b;">Alignment</span>
<svg class="r" style="left:646px;top:164px;" width="9" height="9" viewBox="0 0 9 9"><path d="M0.500 6.600V0.500H6.800M3.200 3.300L7.300 7.300M3.200 7.400H7.500V3.300" fill="none" stroke="#2b2b2b" stroke-width="1" stroke-linecap="round"/></svg>
<span class="t" style="left:710.40px;top:160.50px;font-size:11.5px;line-height:15px;letter-spacing:0.000px;color:#3b3b3b;">Number</span>
<svg class="r" style="left:808px;top:164px;" width="9" height="9" viewBox="0 0 9 9"><path d="M0.500 6.600V0.500H6.800M3.200 3.300L7.300 7.300M3.200 7.400H7.500V3.300" fill="none" stroke="#2b2b2b" stroke-width="1" stroke-linecap="round"/></svg>
<span class="t" style="left:904.00px;top:160.50px;font-size:11.5px;line-height:15px;letter-spacing:-0.453px;color:#3b3b3b;">Styles</span>
<span class="t" style="left:1079.80px;top:160.50px;font-size:11.5px;line-height:15px;letter-spacing:-0.572px;color:#3b3b3b;">Cells</span>
<span class="t" style="left:1254.60px;top:160.50px;font-size:11.5px;line-height:15px;letter-spacing:0.063px;color:#3b3b3b;">Editing</span>
<span class="t" style="left:1637.00px;top:160.50px;font-size:11.5px;line-height:15px;letter-spacing:0.120px;color:#3b3b3b;">Adobe Acrobat</span>
<span class="t" style="left:1776.00px;top:160.50px;font-size:11.5px;line-height:15px;letter-spacing:-0.248px;color:#3b3b3b;">Spreadsheet Sync</span>
<svg class="r" style="left:29px;top:86px;" width="30" height="32" viewBox="0 0 30 32"><rect x="1.500" y="4" width="19" height="24.500" rx="1.500" fill="#ececec" stroke="#bcbcbc" stroke-width="1.3"/><path d="M6.500 4.500v-1h2.200a2.400 2.400 0 0 1 4.600 0h2.200v1.800h-9z" fill="#f6f6f6" stroke="#c4c4c4" stroke-width="1"/><rect x="13.500" y="12.500" width="14" height="18" fill="#fafafa" stroke="#c4c4c4" stroke-width="1.1"/></svg>
<span class="t" style="left:27.50px;top:121.00px;font-size:12.3px;line-height:16px;letter-spacing:-0.790px;color:#a6a6a6;">Paste</span>
<svg class="r" style="left:35.5px;top:140px;" width="10" height="8" viewBox="0 0 10 8"><path d="M2.2 2.6 L5 5.4 L7.8 2.6" fill="none" stroke="#b8b8b8" stroke-width="1.1" stroke-linecap="round" stroke-linejoin="round"/></svg>
<svg class="r" style="left:70px;top:85px;" width="13" height="18" viewBox="0 0 13 18"><path d="M3.300 1l5 11.500M9.700 1l-5 11.500" stroke="#3b3b3b" stroke-width="1.1" fill="none"/><circle cx="3.200" cy="14.300" r="1.900" fill="none" stroke="#1e88d2" stroke-width="1.1"/><circle cx="9.800" cy="14.300" r="1.900" fill="none" stroke="#1e88d2" stroke-width="1.1"/></svg>
<svg class="r" style="left:67px;top:111px;" width="18" height="18" viewBox="0 0 18 18"><path d="M6.500 4.500V1.500H1.500v11.500h4" fill="none" stroke="#3b3b3b" stroke-width="1.1"/><path d="M6.500 4.500h6l3.500 3.500v8.500h-9.500z" fill="#fff" stroke="#3b3b3b" stroke-width="1.1"/><path d="M9 10.500h4.500M9 13h4.500" stroke="#3b3b3b" stroke-width="1"/></svg>
<svg class="r" style="left:94.5px;top:116px;" width="10" height="8" viewBox="0 0 10 8"><path d="M2.2 2.6 L5 5.4 L7.8 2.6" fill="none" stroke="#333" stroke-width="1.2" stroke-linecap="round" stroke-linejoin="round"/></svg>
<svg class="r" style="left:67px;top:137px;" width="18" height="18" viewBox="0 0 18 18"><path d="M10.500 5.500l4-4 2.200 2.200-4 4" fill="#fff" stroke="#3b3b3b" stroke-width="1.1"/><path d="M8.500 5l5 5-1.500 1.500-5-5z" fill="#fff" stroke="#3b3b3b" stroke-width="1"/><path d="M7 6.500l5 5-4.500 4.500-6.500-4z" fill="#ffe2c2" stroke="#e07b16" stroke-width="1.1" stroke-linejoin="round"/><path d="M4.500 9.500l4 4" stroke="#e07b16" stroke-width="0.900"/></svg>
<div class="r" style="left:128px;top:90px;width:123px;height:23.5px;background:#ffffff;border:1px solid #8f8f8f;border-radius:4px;"></div>
<span class="t" style="left:131.00px;top:93.85px;font-size:12.3px;line-height:16px;letter-spacing:-0.125px;color:#1b1b1b;">Aptos Narrow</span>
<svg class="r" style="left:239.3px;top:98.5px;" width="10" height="8" viewBox="0 0 10 8"><path d="M2.2 2.6 L5 5.4 L7.8 2.6" fill="none" stroke="#333" stroke-width="1.2" stroke-linecap="round" stroke-linejoin="round"/></svg>
<div class="r" style="left:253.5px;top:90px;width:42.5px;height:23.5px;background:#ffffff;border:1px solid #8f8f8f;border-radius:4px;"></div>
<span class="t" style="left:256.50px;top:93.85px;font-size:12.3px;line-height:16px;transform:scaleX(0.7911);transform-origin:0 0;-webkit-text-stroke:0.16px;color:#1b1b1b;">11</span>
<svg class="r" style="left:284.3px;top:98.5px;" width="10" height="8" viewBox="0 0 10 8"><path d="M2.2 2.6 L5 5.4 L7.8 2.6" fill="none" stroke="#333" stroke-width="1.2" stroke-linecap="round" stroke-linejoin="round"/></svg>
<svg class="r" style="left:302px;top:92px;" width="19" height="20" viewBox="0 0 19 20"><text x="0" y="16.500" font-family="Liberation Sans,sans-serif" font-size="16.800" fill="#444">A</text><path d="M13.500 6.800l2.200-2.400 2.200 2.400" fill="none" stroke="#1e88d2" stroke-width="1.100"/></svg>
<svg class="r" style="left:329px;top:92px;" width="19" height="20" viewBox="0 0 19 20"><text x="0.500" y="16.500" font-family="Liberation Sans,sans-serif" font-size="13.800" fill="#444">A</text><path d="M11.600 4.800l2.200 2.400 2.200-2.400" fill="none" stroke="#1e88d2" stroke-width="1.100"/></svg>
<span class="t" style="left:136.00px;top:124.50px;font-size:14px;line-height:18px;letter-spacing:-1.311px;color:#3b3b3b;font-weight:bold;">B</span>
<span class="t" style="left:163.50px;top:124.00px;font-size:14.5px;line-height:19px;color:#3b3b3b;font-style:italic;font-family:'Liberation Serif',serif;">I</span>
<span class="t" style="left:187.00px;top:124.30px;font-size:13.5px;line-height:18px;letter-spacing:-0.750px;color:#3b3b3b;">U</span>
<div class="r" style="left:187px;top:140.5px;width:9.2px;height:1px;background:#3b3b3b;"></div>
<svg class="r" style="left:205.3px;top:130.5px;" width="10" height="8" viewBox="0 0 10 8"><path d="M2.2 2.6 L5 5.4 L7.8 2.6" fill="none" stroke="#333" stroke-width="1.2" stroke-linecap="round" stroke-linejoin="round"/></svg>
<div class="r" style="left:221.0px;top:122px;width:1px;height:24px;background:#dcdcdc;"></div>
<svg class="r" style="left:227px;top:125px;" width="18" height="17" viewBox="0 0 18 17"><path d="M1.500 1.500h15M1.500 1.500v11.500M16.500 1.500v11.500M9 1.500v11.500M1.500 7.300h15" stroke="#3b3b3b" stroke-width="1" stroke-dasharray="1 1.200" fill="none"/><path d="M1 15.300h16" stroke="#1b1b1b" stroke-width="1.400"/></svg>
<svg class="r" style="left:249px;top:130.5px;" width="10" height="8" viewBox="0 0 10 8"><path d="M2.2 2.6 L5 5.4 L7.8 2.6" fill="none" stroke="#333" stroke-width="1.2" stroke-linecap="round" stroke-linejoin="round"/></svg>
<div class="r" style="left:265.0px;top:122px;width:1px;height:24px;background:#dcdcdc;"></div>
<svg class="r" style="left:272px;top:124px;" width="17" height="19" viewBox="0 0 17 19"><path d="M6.500 3.300l5.800 5.800-4.600 4.300-5.200-5z" fill="#fff" stroke="#3b3b3b" stroke-width="1.050" stroke-linejoin="round"/><path d="M6.500 3.300V1.200" stroke="#3b3b3b" stroke-width="1"/><path d="M12.300 7.200c1.800.8 2.300 2.500 1.300 4.300" fill="none" stroke="#1e6fc0" stroke-width="1.500"/><rect x="0" y="14.500" width="16.200" height="3.700" fill="#ffed00"/></svg>
<svg class="r" style="left:293.5px;top:130.5px;" width="10" height="8" viewBox="0 0 10 8"><path d="M2.2 2.6 L5 5.4 L7.8 2.6" fill="none" stroke="#333" stroke-width="1.2" stroke-linecap="round" stroke-linejoin="round"/></svg>
<span class="t" style="left:316.00px;top:121.00px;font-size:15px;line-height:20px;color:#3b3b3b;">A</span>
<div class="r" style="left:313px;top:138.5px;width:16.3px;height:3.7px;background:#e81123;"></div>
<svg class="r" style="left:335px;top:130.5px;" width="10" height="8" viewBox="0 0 10 8"><path d="M2.2 2.6 L5 5.4 L7.8 2.6" fill="none" stroke="#333" stroke-width="1.2" stroke-linecap="round" stroke-linejoin="round"/></svg>
<div class="r" style="left:369px;top:94px;width:14px;height:1px;background:#3b3b3b;"></div>
<div class="r" style="left:372px;top:98px;width:9px;height:1px;background:#3b3b3b;"></div>
<div class="r" style="left:369px;top:102px;width:14px;height:1px;background:#3b3b3b;"></div>
<div class="r" style="left:390.3px;top:90px;width:23.5px;height:23.5px;background:#ebebeb;border:1px solid #8f8f8f;border-radius:4px;"></div>
<div class="r" style="left:395px;top:97px;width:14px;height:1px;background:#3b3b3b;"></div>
<div class="r" style="left:398px;top:102px;width:9px;height:1px;background:#3b3b3b;"></div>
<div class="r" style="left:395px;top:106px;width:14px;height:1px;background:#3b3b3b;"></div>
<div class="r" style="left:421px;top:100px;width:14px;height:1px;background:#3b3b3b;"></div>
<div class="r" style="left:424px;top:105px;width:9px;height:1px;background:#3b3b3b;"></div>
<div class="r" style="left:421px;top:110px;width:14px;height:1px;background:#3b3b3b;"></div>
<div class="r" style="left:441.8px;top:90px;width:1px;height:23.5px;background:#dcdcdc;"></div>
<svg class="r" style="left:448px;top:91px;" width="19" height="21" viewBox="0 0 19 21"><text x="0" y="0" font-family="Liberation Sans,sans-serif" font-size="9.500" fill="#3b3b3b" transform="translate(3.500 12) rotate(-38)">ab</text><path d="M5.500 19.500L16 8M11.300 7.600l5-.1-.1 5" fill="none" stroke="#1e88d2" stroke-width="1.150"/></svg>
<svg class="r" style="left:468.6px;top:98.5px;" width="10" height="8" viewBox="0 0 10 8"><path d="M2.2 2.6 L5 5.4 L7.8 2.6" fill="none" stroke="#333" stroke-width="1.2" stroke-linecap="round" stroke-linejoin="round"/></svg>
<div class="r" style="left:501.0px;top:89.5px;width:1px;height:61.099999999999994px;background:#dcdcdc;"></div>
<div class="r" style="left:508.4px;top:90px;width:84.4px;height:23.5px;background:#ebebeb;border:1px solid #8f8f8f;border-radius:4px;"></div>
<svg class="r" style="left:513px;top:93px;" width="17" height="18" viewBox="0 0 17 18"><text x="1" y="7.500" font-family="Liberation Sans,sans-serif" font-size="8.800" fill="#3b3b3b">ab</text><text x="1" y="15.300" font-family="Liberation Sans,sans-serif" font-size="8.800" fill="#3b3b3b">c</text><path d="M13 5.500h1.200a2.300 2.300 0 0 1 0 6.500H7.500M9.800 9.300L7.200 12l2.600 2.700" fill="none" stroke="#1e88d2" stroke-width="1.150"/></svg>
<span class="t" style="left:532.30px;top:94.50px;font-size:12.3px;line-height:16px;letter-spacing:-0.379px;color:#1b1b1b;">Wrap Text</span>
<div class="r" style="left:364.4px;top:122.3px;width:23.2px;height:23.5px;background:#ebebeb;border:1px solid #8f8f8f;border-radius:4px;"></div>
<div class="r" style="left:369px;top:126px;width:14px;height:1px;background:#3b3b3b;"></div>
<div class="r" style="left:369px;top:131px;width:10px;height:1px;background:#3b3b3b;"></div>
<div class="r" style="left:369px;top:135px;width:14px;height:1px;background:#3b3b3b;"></div>
<div class="r" style="left:369px;top:140px;width:10px;height:1px;background:#3b3b3b;"></div>
<div class="r" style="left:395px;top:126px;width:14px;height:1px;background:#3b3b3b;"></div>
<div class="r" style="left:398px;top:131px;width:10px;height:1px;background:#3b3b3b;"></div>
<div class="r" style="left:395px;top:135px;width:14px;height:1px;background:#3b3b3b;"></div>
<div class="r" style="left:398px;top:140px;width:10px;height:1px;background:#3b3b3b;"></div>
<div class="r" style="left:421px;top:126px;width:14px;height:1px;background:#3b3b3b;"></div>
<div class="r" style="left:426px;top:131px;width:10px;height:1px;background:#3b3b3b;"></div>
<div class="r" style="left:421px;top:135px;width:14px;height:1px;background:#3b3b3b;"></div>
<div class="r" style="left:426px;top:140px;width:10px;height:1px;background:#3b3b3b;"></div>
<div class="r" style="left:441.8px;top:122px;width:1px;height:24px;background:#dcdcdc;"></div>
<svg class="r" style="left:449px;top:125px;" width="16" height="17" viewBox="0 0 16 17"><path d="M1 2.500h14M8 6.500h7M8 10.500h7M1 14.500h14" stroke="#3b3b3b" stroke-width="1"/><path d="M6.200 8.500H0.900M3.200 6L0.800 8.500 3.200 11" fill="none" stroke="#1e88d2" stroke-width="1.150"/></svg>
<svg class="r" style="left:475px;top:125px;" width="16" height="17" viewBox="0 0 16 17"><path d="M1 2.500h14M8 6.500h7M8 10.500h7M1 14.500h14" stroke="#3b3b3b" stroke-width="1"/><path d="M0.800 8.500h5.300M3.800 6l2.400 2.500L3.800 11" fill="none" stroke="#1e88d2" stroke-width="1.150"/></svg>
<svg class="r" style="left:511.7px;top:125.8px;" width="16" height="16" viewBox="0 0 16 16"><path d="M0.600 0.600h14.800v14.800H0.600zM0.600 3.600h14.800M0.600 12.400h14.800M8 0.600v3M8 12.400v3" fill="none" stroke="#3b3b3b" stroke-width="1.100"/><rect x="0.600" y="3.600" width="14.800" height="8.800" fill="#fff" stroke="#1e88d2" stroke-width="1.100"/><path d="M3 8h10M5 5.800L2.800 8 5 10.200M11 5.800L13.200 8 11 10.200" fill="none" stroke="#1e88d2" stroke-width="1.100"/></svg>
<span class="t" style="left:532.30px;top:126.70px;font-size:12.3px;line-height:16px;letter-spacing:-0.151px;color:#1b1b1b;">Merge &amp; Center</span>
<svg class="r" style="left:632.5px;top:130.5px;" width="10" height="8" viewBox="0 0 10 8"><path d="M2.2 2.6 L5 5.4 L7.8 2.6" fill="none" stroke="#333" stroke-width="1.2" stroke-linecap="round" stroke-linejoin="round"/></svg>
<div class="r" style="left:666.5px;top:90px;width:145.2px;height:23.5px;background:#ffffff;border:1px solid #8f8f8f;border-radius:4px;"></div>
<span class="t" style="left:669.30px;top:93.85px;font-size:12.3px;line-height:16px;letter-spacing:-0.622px;color:#1b1b1b;">General</span>
<svg class="r" style="left:800.2px;top:98.5px;" width="10" height="8" viewBox="0 0 10 8"><path d="M2.2 2.6 L5 5.4 L7.8 2.6" fill="none" stroke="#333" stroke-width="1.2" stroke-linecap="round" stroke-linejoin="round"/></svg>
<span class="t" style="left:673.40px;top:124.00px;font-size:15px;line-height:20px;letter-spacing:-0.241px;color:#3b3b3b;">$</span>
<svg class="r" style="left:691px;top:130.5px;" width="10" height="8" viewBox="0 0 10 8"><path d="M2.2 2.6 L5 5.4 L7.8 2.6" fill="none" stroke="#333" stroke-width="1.2" stroke-linecap="round" stroke-linejoin="round"/></svg>
<span class="t" style="left:711.30px;top:124.00px;font-size:15.5px;line-height:20px;letter-spacing:1.417px;color:#3b3b3b;">%</span>
<span class="t" style="left:739.50px;top:111.00px;font-size:30px;line-height:30px;color:#3b3b3b;font-weight:bold;font-family:'Liberation Serif',serif;">,</span>
<div class="r" style="left:758.8px;top:122px;width:1px;height:24px;background:#dcdcdc;"></div>
<svg class="r" style="left:765px;top:125px;" width="18" height="17" viewBox="0 0 18 17"><text x="10.300" y="7" font-family="Liberation Sans,sans-serif" font-size="8.300" fill="#3b3b3b">0</text><text x="3" y="15.500" font-family="Liberation Sans,sans-serif" font-size="8.300" fill="#3b3b3b">.00</text><path d="M8.200 4.300H1.200M3.600 1.900L1.200 4.300 3.600 6.700" fill="none" stroke="#1e88d2" stroke-width="1.100"/></svg>
<svg class="r" style="left:791px;top:125px;" width="18" height="17" viewBox="0 0 18 17"><text x="3.500" y="7" font-family="Liberation Sans,sans-serif" font-size="8.300" fill="#3b3b3b">.00</text><text x="10.300" y="15.500" font-family="Liberation Sans,sans-serif" font-size="8.300" fill="#3b3b3b">.0</text><path d="M1 12.500h7M5.600 10.100L8 12.500 5.600 14.900" fill="none" stroke="#1e88d2" stroke-width="1.100"/></svg>
<svg class="r" style="left:851px;top:90px;" width="29" height="22" viewBox="0 0 29 22"><rect x="0.500" y="0.500" width="27.500" height="21" fill="#fff" stroke="#3b3b3b" stroke-width="1"/><path d="M0.500 7.500h27.500M0.500 14.500h27.500M5.500 0.500v21M13.500 0.500v21M18.500 0.500v21M23.500 0.500v21" stroke="#3b3b3b" stroke-width="0.900"/><rect x="5.500" y="0.500" width="12.500" height="7" fill="#f8a1a8" stroke="#e03a3e" stroke-width="1"/><rect x="5.500" y="7.500" width="8" height="7" fill="#8ec1ee" stroke="#2b7cd3" stroke-width="1"/><rect x="5.500" y="14.500" width="14" height="7" fill="#f8a1a8" stroke="#e03a3e" stroke-width="1"/></svg>
<span class="t" style="left:834.70px;top:120.00px;font-size:12.3px;line-height:16px;letter-spacing:-0.058px;color:#1b1b1b;">Conditional</span>
<span class="t" style="left:830.40px;top:135.50px;font-size:12.3px;line-height:16px;letter-spacing:-0.068px;color:#1b1b1b;">Formatting</span>
<svg class="r" style="left:890.7px;top:140.5px;" width="10" height="8" viewBox="0 0 10 8"><path d="M2.4 2.6 L5 5.2 L7.6 2.6" fill="none" stroke="#333" stroke-width="1.1" stroke-linecap="round" stroke-linejoin="round"/></svg>
<svg class="r" style="left:919px;top:90px;" width="31" height="28" viewBox="0 0 31 28"><rect x="0.500" y="0.500" width="27" height="21" fill="#fff" stroke="#3b3b3b" stroke-width="1"/><rect x="9.500" y="7.500" width="18" height="14" fill="#5fa8e8"/><path d="M0.500 7.500h27M0.500 14.500h27M9.500 0.500v21M18.500 0.500v21" stroke="#3b3b3b" stroke-width="0.900"/><path d="M9.500 7.500h18v14h-18zM18.500 7.500v14M9.500 14.500h18" fill="none" stroke="#2b7cd3" stroke-width="0.900"/><path d="M29.500 8.500L19 21" stroke="#fff" stroke-width="5" stroke-linecap="round"/><path d="M29.500 8.500L19.500 20.500" stroke="#3b3b3b" stroke-width="3.200" stroke-linecap="round"/><path d="M29.500 8.500L19.500 20.500" stroke="#e6e6e6" stroke-width="1.600" stroke-linecap="round"/><path d="M19.800 19.200c-2.500-.5-4.300.8-4.800 2.800-.4 1.600-1.500 2.600-3.600 3 2.800 1.500 6.500 1.300 8.500-.8 1.400-1.500 1.400-3.600-.1-5z" fill="#4a9be0"/></svg>
<span class="t" style="left:907.40px;top:120.00px;font-size:12.3px;line-height:16px;letter-spacing:-0.440px;color:#1b1b1b;">Format as</span>
<span class="t" style="left:914.40px;top:135.50px;font-size:12.3px;line-height:16px;letter-spacing:-0.361px;color:#1b1b1b;">Table</span>
<svg class="r" style="left:943.5px;top:140.5px;" width="10" height="8" viewBox="0 0 10 8"><path d="M2.4 2.6 L5 5.2 L7.6 2.6" fill="none" stroke="#333" stroke-width="1.1" stroke-linecap="round" stroke-linejoin="round"/></svg>
<svg class="r" style="left:973px;top:90px;" width="31" height="28" viewBox="0 0 31 28"><rect x="0.500" y="0.500" width="27" height="21" fill="#fff" stroke="#3b3b3b" stroke-width="1"/><path d="M0.500 4.500h27M0.500 17.500h27M5.500 0.500v21M23.500 0.500v21" stroke="#3b3b3b" stroke-width="0.900"/><rect x="5.500" y="4.500" width="18" height="13" fill="#7ab6ec" stroke="#2b7cd3" stroke-width="1"/><path d="M29.500 8.500L19 21" stroke="#fff" stroke-width="5" stroke-linecap="round"/><path d="M29.500 8.500L19.500 20.500" stroke="#3b3b3b" stroke-width="3.200" stroke-linecap="round"/><path d="M29.500 8.500L19.500 20.500" stroke="#e6e6e6" stroke-width="1.600" stroke-linecap="round"/><path d="M19.800 19.200c-2.500-.5-4.300.8-4.800 2.800-.4 1.600-1.500 2.600-3.600 3 2.800 1.500 6.500 1.300 8.500-.8 1.400-1.500 1.400-3.600-.1-5z" fill="#4a9be0"/></svg>
<span class="t" style="left:977.00px;top:120.00px;font-size:12.3px;line-height:16px;letter-spacing:-0.297px;color:#1b1b1b;">Cell</span>
<span class="t" style="left:966.00px;top:135.50px;font-size:12.3px;line-height:16px;letter-spacing:-0.499px;color:#1b1b1b;">Styles</span>
<svg class="r" style="left:997.5px;top:140.5px;" width="10" height="8" viewBox="0 0 10 8"><path d="M2.4 2.6 L5 5.2 L7.6 2.6" fill="none" stroke="#333" stroke-width="1.1" stroke-linecap="round" stroke-linejoin="round"/></svg>
<svg class="r" style="left:1030px;top:89px;" width="33" height="24" viewBox="0 0 33 24"><rect x="3.500" y="1.500" width="25" height="21" fill="#f3f3f3" stroke="#bdbdbd" stroke-width="1"/><path d="M3.500 8.500h25M3.500 15.500h25M11.500 1.500v21M19.500 1.500v21" stroke="#bdbdbd" stroke-width="1"/><rect x="8" y="8.500" width="24" height="7" fill="#d4d4d4" stroke="#bdbdbd"/><path d="M13 12H2.500M6.500 8L2.300 12l4.200 4" fill="none" stroke="#c6c6c6" stroke-width="1.600"/></svg>
<span class="t" style="left:1032.30px;top:120.70px;font-size:12.3px;line-height:16px;letter-spacing:-0.377px;color:#1b1b1b;">Insert</span>
<svg class="r" style="left:1041.3px;top:140.5px;" width="10" height="8" viewBox="0 0 10 8"><path d="M2.2 2.6 L5 5.4 L7.8 2.6" fill="none" stroke="#333" stroke-width="1.2" stroke-linecap="round" stroke-linejoin="round"/></svg>
<svg class="r" style="left:1076px;top:89px;" width="31" height="24" viewBox="0 0 31 24"><rect x="1.500" y="1.500" width="27" height="21" fill="#fff" stroke="#3b3b3b" stroke-width="1"/><path d="M1.500 8.500h27M1.500 15.500h27M10.500 1.500v21M19.500 1.500v21" stroke="#3b3b3b" stroke-width="1"/><path d="M5 8.500h13l3.500 3.500-3.500 3.500H5z" fill="#5fa8e8" stroke="#2b7cd3" stroke-width="1"/><rect x="18" y="6" width="13" height="12" fill="#fff"/><path d="M19.500 6.500l10 11M29.500 6.500l-10 11" stroke="#e8373e" stroke-width="1.300"/></svg>
<span class="t" style="left:1074.60px;top:120.70px;font-size:12.3px;line-height:16px;letter-spacing:-0.542px;color:#1b1b1b;">Delete</span>
<svg class="r" style="left:1085.3px;top:140.5px;" width="10" height="8" viewBox="0 0 10 8"><path d="M2.2 2.6 L5 5.4 L7.8 2.6" fill="none" stroke="#333" stroke-width="1.2" stroke-linecap="round" stroke-linejoin="round"/></svg>
<svg class="r" style="left:1120px;top:84px;" width="30" height="29" viewBox="0 0 30 29"><path d="M7.500 2.500h15M7.500 0.500v4M22.500 0.500v4" stroke="#1e88d2" stroke-width="1.100"/><rect x="1.500" y="6.500" width="27" height="21" fill="#fff" stroke="#3b3b3b" stroke-width="1"/><path d="M1.500 13.500h27M1.500 20.500h27M8.500 6.500v21M21.500 6.500v21" stroke="#3b3b3b" stroke-width="1"/><rect x="8.500" y="13.500" width="13" height="7" fill="#5fa8e8" stroke="#2b7cd3" stroke-width="1"/></svg>
<span class="t" style="left:1116.70px;top:120.00px;font-size:12.3px;line-height:16px;letter-spacing:-0.308px;color:#1b1b1b;">Format</span>
<svg class="r" style="left:1129.8px;top:139.5px;" width="10" height="8" viewBox="0 0 10 8"><path d="M2.2 2.6 L5 5.4 L7.8 2.6" fill="none" stroke="#333" stroke-width="1.2" stroke-linecap="round" stroke-linejoin="round"/></svg>
<svg class="r" style="left:1178px;top:87px;" width="14" height="16" viewBox="0 0 14 16"><path d="M12 3.200V1.500H1.800L7.600 8 1.800 14.500H12v-1.700" fill="none" stroke="#3b3b3b" stroke-width="1.150" stroke-linejoin="miter"/></svg>
<span class="t" style="left:1197.50px;top:87.30px;font-size:12.3px;line-height:16px;letter-spacing:-0.227px;color:#1b1b1b;">AutoSum</span>
<svg class="r" style="left:1262.5px;top:91.5px;" width="10" height="8" viewBox="0 0 10 8"><path d="M2.2 2.6 L5 5.4 L7.8 2.6" fill="none" stroke="#333" stroke-width="1.2" stroke-linecap="round" stroke-linejoin="round"/></svg>
<svg class="r" style="left:1176.5px;top:113px;" width="17" height="14" viewBox="0 0 17 14"><rect x="0.600" y="0.600" width="15.300" height="12.600" fill="#fff" stroke="#3b3b3b" stroke-width="1.100"/><path d="M0.600 3.300h15.300" stroke="#3b3b3b" stroke-width="1"/><path d="M8.200 5v6M5.600 8.600L8.200 11.200 10.800 8.600" fill="none" stroke="#1e88d2" stroke-width="1.150"/></svg>
<span class="t" style="left:1197.50px;top:112.50px;font-size:12.3px;line-height:16px;letter-spacing:-0.303px;color:#1b1b1b;">Fill</span>
<svg class="r" style="left:1213.8px;top:116.5px;" width="10" height="8" viewBox="0 0 10 8"><path d="M2.4 2.6 L5 5.2 L7.6 2.6" fill="none" stroke="#333" stroke-width="1.1" stroke-linecap="round" stroke-linejoin="round"/></svg>
<svg class="r" style="left:1176px;top:138px;" width="18" height="16" viewBox="0 0 18 16"><path d="M9.800 1.200l6.500 4.300-6.500 9.300H6.500L1.500 11.500z" fill="#fff" stroke="#a33fb0" stroke-width="1.150" stroke-linejoin="round"/><path d="M5.300 6.200l6.300 4.500-2 3.800H6.500L1.700 11.400z" fill="#c77dd1" stroke="#a33fb0" stroke-width="0.800"/></svg>
<span class="t" style="left:1197.50px;top:138.80px;font-size:12.3px;line-height:16px;letter-spacing:-0.578px;color:#1b1b1b;">Clear</span>
<svg class="r" style="left:1225.8px;top:142.8px;" width="10" height="8" viewBox="0 0 10 8"><path d="M2.4 2.6 L5 5.2 L7.6 2.6" fill="none" stroke="#333" stroke-width="1.1" stroke-linecap="round" stroke-linejoin="round"/></svg>
<svg class="r" style="left:1287px;top:86px;" width="32" height="29" viewBox="0 0 32 29"><text x="1.500" y="12.500" font-family="Liberation Sans,sans-serif" font-size="14" fill="#1e88d2">A</text><text x="2" y="26.500" font-family="Liberation Sans,sans-serif" font-size="14" fill="#3b3b3b">Z</text><path d="M14.500 6.500h15.500l-6 7v8.500h-3.500v-8.500z" fill="#fff" stroke="#3b3b3b" stroke-width="1.150" stroke-linejoin="round"/></svg>
<span class="t" style="left:1286.50px;top:120.00px;font-size:12.3px;line-height:16px;letter-spacing:-0.213px;color:#1b1b1b;">Sort &amp;</span>
<span class="t" style="left:1284.80px;top:135.70px;font-size:12.3px;line-height:16px;letter-spacing:0.062px;color:#1b1b1b;">Filter</span>
<svg class="r" style="left:1311.8px;top:140.5px;" width="10" height="8" viewBox="0 0 10 8"><path d="M2.4 2.6 L5 5.2 L7.6 2.6" fill="none" stroke="#333" stroke-width="1.1" stroke-linecap="round" stroke-linejoin="round"/></svg>
<svg class="r" style="left:1333px;top:86px;" width="32" height="30" viewBox="0 0 32 30"><circle cx="20" cy="11" r="9.800" fill="#fff" stroke="#3b3b3b" stroke-width="1.150"/><path d="M13 18.200L1.500 28.500" stroke="#3b3b3b" stroke-width="1.200"/></svg>
<span class="t" style="left:1331.70px;top:120.00px;font-size:12.3px;line-height:16px;letter-spacing:-0.091px;color:#1b1b1b;">Find &amp;</span>
<span class="t" style="left:1328.80px;top:135.70px;font-size:12.3px;line-height:16px;letter-spacing:-0.697px;color:#1b1b1b;">Select</span>
<svg class="r" style="left:1360.8px;top:140.5px;" width="10" height="8" viewBox="0 0 10 8"><path d="M2.4 2.6 L5 5.2 L7.6 2.6" fill="none" stroke="#333" stroke-width="1.1" stroke-linecap="round" stroke-linejoin="round"/></svg>
<svg class="r" style="left:1472px;top:87px;" width="28" height="28" viewBox="0 0 28 28"><rect x="0.500" y="0.500" width="27" height="27" fill="#fff" stroke="#d83b01" stroke-width="1"/><rect x="3.500" y="3.500" width="9" height="9" fill="none" stroke="#d83b01" stroke-width="1"/><rect x="15.500" y="3.500" width="9" height="9" fill="none" stroke="#d83b01" stroke-width="1"/><rect x="3.500" y="15.500" width="9" height="9" fill="none" stroke="#d83b01" stroke-width="1"/><rect x="15.500" y="15.500" width="9" height="9" fill="none" stroke="#d83b01" stroke-width="1"/></svg>
<span class="t" style="left:1465.00px;top:120.00px;font-size:12.3px;line-height:16px;letter-spacing:0.042px;color:#1b1b1b;">Add-ins</span>
<svg class="r" style="left:1533px;top:87px;" width="31" height="29" viewBox="0 0 31 29"><defs><linearGradient id="cpa" x1="0" y1="0" x2="1" y2="0.300"><stop offset="0" stop-color="#25b9ea"/><stop offset="0.550" stop-color="#1f7fe0"/><stop offset="1" stop-color="#1a3fb5"/></linearGradient><linearGradient id="cpb" x1="0.300" y1="0" x2="0.600" y2="1"><stop offset="0" stop-color="#21a9c9"/><stop offset="0.250" stop-color="#5cc46a"/><stop offset="0.500" stop-color="#f2c92e"/><stop offset="0.750" stop-color="#f27a2e"/><stop offset="1" stop-color="#e2405a"/></linearGradient><linearGradient id="cpc" x1="0.600" y1="0" x2="0.300" y2="1"><stop offset="0" stop-color="#a556ea"/><stop offset="0.450" stop-color="#d957b8"/><stop offset="0.800" stop-color="#f0768a"/><stop offset="1" stop-color="#f7a24a"/></linearGradient></defs><path d="M3.800 3.200C4.800 1 6.500 0 9 0h10.500c2.800 0 4.300 1.400 5.100 3.800L26 8.200h-6.800l-1.300-3.700c-.5-1.400-1.300-2-2.800-2z" fill="url(#cpa)"/><path d="M3.800 3.200C4.800 1 6.500 0 9 0h9.500c-2.200 0-3.400 1.200-4.100 3.400L10.500 17.500c-.8 2.800-.4 5.500 1.800 7.800l1 1.800c-1 .9-2.200 1.300-3.800 1.300-3 0-4.600-1.600-5.400-4.200L.9 14.500c-.8-2.600-.6-4.700.3-6.500z" fill="url(#cpb)"/><path d="M27.200 25.300c-1 2.200-2.700 3.200-5.200 3.200H9c2.200 0 3.400-1.200 4.100-3.400l3.600-12.400c.8-2.800 2.200-4.500 5.400-4.500h4.700c2.500 0 4 1.800 3.300 4.500z" fill="url(#cpc)"/></svg>
<span class="t" style="left:1528.00px;top:120.00px;font-size:12.3px;line-height:16px;letter-spacing:0.102px;color:#1b1b1b;">Copilot</span>
<svg class="r" style="left:1615px;top:88px;" width="28" height="29" viewBox="0 0 28 29"><path d="M13.500 1H4.500A2.500 2.500 0 0 0 2 3.500v17A2.500 2.500 0 0 0 4.500 23H10M13.500 1L19 6.500v5M13.500 1v5.500H19" fill="none" stroke="#2f6fe0" stroke-width="1.300" stroke-linejoin="round"/><path d="M6 14c2-.5 4-3 4.500-6.500.2-1.200-1.300-1.300-1.200 0 .3 3 2.500 5.500 5 5.800 1.200.1 1.200-1 0-1-2.500 0-6 .7-8.300 1.700z" fill="none" stroke="#2f6fe0" stroke-width="0.900"/><rect x="11" y="17.500" width="8.500" height="5" rx="2.500" fill="#fff" stroke="#2f6fe0" stroke-width="1.300" transform="rotate(-45 15.200 20)"/><rect x="16.500" y="12" width="8.500" height="5" rx="2.500" fill="#fff" stroke="#2f6fe0" stroke-width="1.300" transform="rotate(-45 20.700 14.500)"/></svg>
<span class="t" style="left:1596.00px;top:120.00px;font-size:12.3px;line-height:16px;letter-spacing:-0.693px;color:#1b1b1b;">Create PDF</span>
<span class="t" style="left:1588.00px;top:135.80px;font-size:12.3px;line-height:16px;letter-spacing:-0.331px;color:#1b1b1b;">and Share link</span>
<svg class="r" style="left:1705px;top:88px;" width="29" height="29" viewBox="0 0 29 29"><path d="M13.500 1H4.500A2.500 2.500 0 0 0 2 3.500v17A2.500 2.500 0 0 0 4.500 23H10M13.500 1L19 6.500v9M13.500 1v5.500H19" fill="none" stroke="#2f6fe0" stroke-width="1.300" stroke-linejoin="round"/><path d="M6 14c2-.5 4-3 4.500-6.500.2-1.200-1.300-1.300-1.200 0 .3 3 2.500 5.500 5 5.800 1.200.1 1.200-1 0-1-2.500 0-6 .7-8.300 1.700z" fill="none" stroke="#2f6fe0" stroke-width="0.900"/><rect x="12.500" y="17.500" width="14.500" height="10" rx="1.500" fill="#fff" stroke="#2f6fe0" stroke-width="1.300"/><path d="M12.800 18.500l7 5 7-5" fill="none" stroke="#2f6fe0" stroke-width="1.200"/></svg>
<span class="t" style="left:1675.00px;top:120.00px;font-size:12.3px;line-height:16px;letter-spacing:-0.576px;color:#1b1b1b;">Create PDF and</span>
<span class="t" style="left:1669.00px;top:135.80px;font-size:12.3px;line-height:16px;letter-spacing:-0.280px;color:#1b1b1b;">Share via Outlook</span>
<svg class="r" style="left:1805px;top:85px;" width="32" height="32" viewBox="0 0 32 32"><circle cx="16" cy="16" r="16" fill="#2ca01c"/><circle cx="11" cy="15.500" r="4.800" fill="none" stroke="#fff" stroke-width="2.500"/><path d="M15.300 8.500v15" stroke="#2ca01c" stroke-width="5"/><path d="M14.600 10.500v13.500" stroke="#fff" stroke-width="2.500"/><circle cx="21" cy="16.500" r="4.800" fill="none" stroke="#fff" stroke-width="2.500"/><path d="M16.700 8v15.500" stroke="#2ca01c" stroke-width="5"/><path d="M17.400 8v13.500" stroke="#fff" stroke-width="2.500"/><path d="M6 15.500a5 5 0 0 1 5-4.800h1.200M26 16.500a5 5 0 0 1-5 4.800h-1.200" fill="none" stroke="#fff" stroke-width="2.500"/></svg>
<span class="t" style="left:1789.00px;top:120.00px;font-size:12.3px;line-height:16px;letter-spacing:-0.522px;color:#1b1b1b;">Spreadsheet</span>
<span class="t" style="left:1809.00px;top:135.80px;font-size:12.3px;line-height:16px;letter-spacing:-0.636px;color:#1b1b1b;">Sync</span>
<div class="r" style="left:8px;top:179px;width:1904px;height:29px;background:#fdf6d3;border-radius:0 0 8px 8px;box-shadow:0 1px 3px rgba(0,0,0,.18);"></div>
<svg class="r" style="left:19px;top:185px;" width="17" height="17" viewBox="0 0 17 17"><circle cx="8.500" cy="8.500" r="7.200" fill="#fff" stroke="#1f86d6" stroke-width="1.500"/><path d="M8.500 7.300v5.200" stroke="#1f6fc2" stroke-width="1.800"/><circle cx="8.500" cy="4.700" r="1.150" fill="#1f6fc2"/></svg>
<span class="t" style="left:44.00px;top:185.80px;font-size:12px;line-height:16px;letter-spacing:-0.597px;color:#1b1b1b;">SLOW WORKBOOK?</span>
<span class="t" style="left:163.00px;top:185.80px;font-size:12px;line-height:16px;letter-spacing:0.027px;color:#1b1b1b;">97% of your workbook has unused formatting and metadata that can be optimized to improve performance.</span>
<div class="r" style="left:744px;top:181px;width:123px;height:25px;background:#ffffff;border:1px solid #8f8f8f;border-radius:4px;"></div>
<span class="t" style="left:753.50px;top:185.80px;font-size:12px;line-height:16px;letter-spacing:-0.149px;color:#1b1b1b;">Check Performance</span>
<svg class="r" style="left:1889px;top:187px;" width="13" height="13" viewBox="0 0 13 13"><path d="M1.500 1.500l9.500 9.500M11 1.500L1.500 11" stroke="#333" stroke-width="1.150"/></svg>
<div class="r" style="left:8.5px;top:216.5px;width:101px;height:25px;background:#ffffff;border:1px solid #cfcfcf;border-radius:5px;"></div>
<span class="t" style="left:15.60px;top:220.30px;font-size:13.5px;line-height:18px;letter-spacing:-1.021px;color:#1b1b1b;">D50</span>
<svg class="r" style="left:93.5px;top:226px;" width="10" height="8" viewBox="0 0 10 8"><path d="M0.8 2.6 L5 6.8 L9.2 2.6" fill="none" stroke="#333" stroke-width="1.2" stroke-linecap="round" stroke-linejoin="round"/></svg>
<div class="r" style="left:118.5px;top:223px;width:2px;height:2px;background:#2b2b2b;"></div>
<div class="r" style="left:118.5px;top:228px;width:2px;height:2px;background:#2b2b2b;"></div>
<div class="r" style="left:118.5px;top:233px;width:2px;height:2px;background:#2b2b2b;"></div>
<div class="r" style="left:130.5px;top:216.5px;width:85px;height:25px;background:#ffffff;border:1px solid #cfcfcf;border-radius:5px;"></div>
<svg class="r" style="left:137px;top:223px;" width="13" height="13" viewBox="0 0 13 13"><path d="M1 1l11 11M12 1L1 12" stroke="#b9b9b9" stroke-width="1.200"/></svg>
<svg class="r" style="left:158px;top:223px;" width="18" height="13" viewBox="0 0 18 13"><path d="M1 7l5 5L17 1" fill="none" stroke="#b9b9b9" stroke-width="1.200"/></svg>
<span class="t" style="left:184.50px;top:218.50px;font-size:16px;line-height:21px;color:#3b3b3b;font-weight:bold;font-style:italic;font-family:'Liberation Serif',serif;">f</span>
<span class="t" style="left:190.50px;top:222.50px;font-size:12.5px;line-height:16px;color:#3b3b3b;font-weight:bold;font-style:italic;font-family:'Liberation Serif',serif;">x</span>
<svg class="r" style="left:203px;top:226px;" width="10" height="8" viewBox="0 0 10 8"><path d="M1.2 2.6 L5 6.4 L8.8 2.6" fill="none" stroke="#8a8a8a" stroke-width="1.1" stroke-linecap="round" stroke-linejoin="round"/></svg>
<div class="r" style="left:220.5px;top:216.5px;width:1691.5px;height:25px;background:#ffffff;border:1px solid #cfcfcf;border-radius:5px;"></div>
<span class="t" style="left:231.00px;top:220.90px;font-size:14px;line-height:18px;transform:scaleX(0.9698);transform-origin:0 0;-webkit-text-stroke:0.16px;color:#1b1b1b;">Refund one pay of Med ($34.50) and Dental ($9.94) deductions as he ended up cancelling the insurance after all.</span>
<svg class="r" style="left:1896.5px;top:224.5px;" width="10" height="8" viewBox="0 0 10 8"><path d="M0.5 2.6 L5 7.1 L9.5 2.6" fill="none" stroke="#333" stroke-width="1.3" stroke-linecap="round" stroke-linejoin="round"/></svg>
<div class="r" style="left:0px;top:978px;width:1920px;height:33px;background:#f0f0f0;"></div>
<div class="r" style="left:0px;top:978px;width:1898px;height:1px;background:#e2e2e2;"></div>
<svg class="r" style="left:27px;top:988px;" width="9" height="12" viewBox="0 0 9 12"><path d="M7 1.500L2 6l5 4.500" fill="none" stroke="#9a9a9a" stroke-width="1.200"/></svg>
<svg class="r" style="left:60px;top:988px;" width="9" height="12" viewBox="0 0 9 12"><path d="M2 1.500L7 6 2 10.500" fill="none" stroke="#9a9a9a" stroke-width="1.200"/></svg>
<div class="r" style="left:361px;top:978px;width:82px;height:27.5px;background:#ffffff;border-radius:0 0 5px 5px;box-shadow:0 1px 2px rgba(0,0,0,.15);"></div>
<span class="t" style="left:369.00px;top:982.50px;font-size:14px;line-height:18px;letter-spacing:-0.071px;color:#1b1b1b;-webkit-text-stroke:0.35px #1b1b1b;">HAA (6Y7)</span>
<div class="r" style="left:369px;top:1000.5px;width:65.5px;height:2px;background:#107c41;"></div>
<div class="r" style="left:1036.5px;top:982px;width:128.5px;height:23.5px;background:#9c0006;border-radius:4px;"></div>
<span class="t" style="left:1047.00px;top:985.30px;font-size:14px;line-height:18px;letter-spacing:-0.124px;color:#ffffff;">Benefit Premiums</span>
<span class="t" style="left:126.00px;top:985.30px;font-size:14px;line-height:18px;letter-spacing:-0.343px;color:#333;">CompOne (U4F)</span>
<span class="t" style="left:252.00px;top:985.30px;font-size:14px;line-height:18px;letter-spacing:-0.533px;color:#333;">FDI (NR2-TXU)</span>
<span class="t" style="left:461.00px;top:985.30px;font-size:14px;line-height:18px;letter-spacing:-0.777px;color:#333;">IME (FJV)</span>
<span class="t" style="left:545.00px;top:985.30px;font-size:14px;line-height:18px;letter-spacing:-0.629px;color:#333;">MAI (RPC)</span>
<span class="t" style="left:635.00px;top:985.30px;font-size:14px;line-height:18px;letter-spacing:-0.710px;color:#333;">MAI (RES)</span>
<span class="t" style="left:724.00px;top:985.30px;font-size:14px;line-height:18px;letter-spacing:-0.167px;color:#333;">Rizikon (M9H)</span>
<span class="t" style="left:839.00px;top:985.30px;font-size:14px;line-height:18px;letter-spacing:-0.581px;color:#333;">SCA (M9F)</span>
<span class="t" style="left:932.00px;top:985.30px;font-size:14px;line-height:18px;letter-spacing:-0.489px;color:#333;">Startech (PCT)</span>
<span class="t" style="left:1183.00px;top:985.30px;font-size:14px;line-height:18px;letter-spacing:-0.123px;color:#333;">Emily Dawood</span>
<span class="t" style="left:1300.00px;top:985.30px;font-size:14px;line-height:18px;letter-spacing:-0.394px;color:#333;">Larry Chessler</span>
<span class="t" style="left:1410.00px;top:985.30px;font-size:14px;line-height:18px;letter-spacing:-0.395px;color:#333;">Sheet1</span>
<div class="r" style="left:238.0px;top:985px;width:1px;height:18px;background:#d0d0d0;"></div>
<div class="r" style="left:355.0px;top:985px;width:1px;height:18px;background:#d0d0d0;"></div>
<div class="r" style="left:447.0px;top:985px;width:1px;height:18px;background:#d0d0d0;"></div>
<div class="r" style="left:531.0px;top:985px;width:1px;height:18px;background:#d0d0d0;"></div>
<div class="r" style="left:621.0px;top:985px;width:1px;height:18px;background:#d0d0d0;"></div>
<div class="r" style="left:709.0px;top:985px;width:1px;height:18px;background:#d0d0d0;"></div>
<div class="r" style="left:824.5px;top:985px;width:1px;height:18px;background:#d0d0d0;"></div>
<div class="r" style="left:917.0px;top:985px;width:1px;height:18px;background:#d0d0d0;"></div>
<div class="r" style="left:1032.0px;top:985px;width:1px;height:18px;background:#d0d0d0;"></div>
<div class="r" style="left:1169.0px;top:985px;width:1px;height:18px;background:#d0d0d0;"></div>
<div class="r" style="left:1285.0px;top:985px;width:1px;height:18px;background:#d0d0d0;"></div>
<div class="r" style="left:1398.0px;top:985px;width:1px;height:18px;background:#d0d0d0;"></div>
<div class="r" style="left:1464.5px;top:985px;width:1px;height:18px;background:#d0d0d0;"></div>
<svg class="r" style="left:1505px;top:987px;" width="14" height="14" viewBox="0 0 14 14"><path d="M7 1v12M1 7h12" stroke="#333" stroke-width="1.100"/></svg>
<div class="r" style="left:1634px;top:989.5px;width:1.8px;height:1.8px;background:#333;border-radius:1px;"></div>
<div class="r" style="left:1634px;top:994.0px;width:1.8px;height:1.8px;background:#333;border-radius:1px;"></div>
<div class="r" style="left:1634px;top:998.5px;width:1.8px;height:1.8px;background:#333;border-radius:1px;"></div>
<div class="r" style="left:1651px;top:985px;width:246px;height:17px;background:#f5f5f5;border-radius:8.500px;"></div>
<div class="r" style="left:1668px;top:988.7px;width:199px;height:9.3px;background:#737373;border-radius:4.650px;"></div>
<svg class="r" style="left:1655px;top:989px;" width="8" height="9" viewBox="0 0 8 9"><path d="M7 0.500v8L0.800 4.500z" fill="#737373"/></svg>
<svg class="r" style="left:1885px;top:989px;" width="8" height="9" viewBox="0 0 8 9"><path d="M1 0.500v8l6.200-4z" fill="#737373"/></svg>
<div class="r" style="left:0px;top:1011px;width:1920px;height:21px;background:#f3f3f3;"></div>
<div class="r" style="left:0px;top:1032px;width:1920px;height:1px;background:#d4d4d4;"></div>
<span class="t" style="left:12.00px;top:1013.80px;font-size:11.5px;line-height:15px;letter-spacing:-0.448px;color:#333;">Ready</span>
<span class="t" style="left:58.00px;top:1013.80px;font-size:11.5px;line-height:15px;letter-spacing:0.090px;color:#333;">Filter Mode</span>
<svg class="r" style="left:136.5px;top:1014px;" width="16" height="14" viewBox="0 0 16 14"><rect x="0.600" y="1.600" width="13" height="10.500" fill="none" stroke="#444" stroke-width="1.100"/><path d="M0.600 4.500h13M3 7h4M3 9.500h3" stroke="#444" stroke-width="1"/><circle cx="10.800" cy="9.800" r="3" fill="#f3f3f3" stroke="#444" stroke-width="1.100"/><circle cx="10.800" cy="9.800" r="1" fill="#444"/></svg>
<svg class="r" style="left:168px;top:1013px;" width="16" height="16" viewBox="0 0 16 16"><circle cx="7" cy="2.600" r="1.600" fill="none" stroke="#444" stroke-width="1.100"/><path d="M1.500 5.500h11M7 5.500v4M7 9.500l-3 5M7 9.500l1.500 2.500" fill="none" stroke="#444" stroke-width="1.100" stroke-linecap="round"/><path d="M10 10.500l4.500 4.500M14.500 10.500L10 15" stroke="#444" stroke-width="1.200"/></svg>
<span class="t" style="left:187.00px;top:1013.80px;font-size:11.5px;line-height:15px;letter-spacing:-0.439px;color:#1b1b1b;font-weight:bold;">Accessibility: Investigate</span>
<div class="r" style="left:1620px;top:1011px;width:40px;height:21px;background:#e1e1e1;"></div>
<svg class="r" style="left:1633px;top:1014px;" width="14" height="14" viewBox="0 0 14 14"><path d="M0.600 0.600h12.800v12.800H0.600zM0.600 4.800h12.800M0.600 9.200h12.800M4.800 0.600v12.800M9.200 0.600v12.800" fill="none" stroke="#222" stroke-width="1.150"/></svg>
<svg class="r" style="left:1673px;top:1014px;" width="14" height="14" viewBox="0 0 14 14"><rect x="0.600" y="0.600" width="12.800" height="12.800" fill="none" stroke="#222" stroke-width="1.150"/><rect x="3.300" y="3.300" width="7.400" height="7.400" fill="none" stroke="#222" stroke-width="1"/><path d="M5 5.800h4M5 8.200h4" stroke="#222" stroke-width="0.900"/></svg>
<svg class="r" style="left:1713px;top:1014px;" width="14" height="14" viewBox="0 0 14 14"><path d="M0.600 0.600h12.800v12.800H0.600z" fill="none" stroke="#222" stroke-width="1.150"/><path d="M4.800 0.600v5.600h4.400V0.600M0.600 6.800h12.800" fill="none" stroke="#222" stroke-width="1.100"/></svg>
<div class="r" style="left:1746px;top:1020.8px;width:7.5px;height:1.2px;background:#333;"></div>
<div class="r" style="left:1759px;top:1020.8px;width:100px;height:1px;background:#8a8a8a;"></div>
<div class="r" style="left:1806.8px;top:1015.5px;width:5px;height:12px;background:#5a5a5a;"></div>
<div class="r" style="left:1864px;top:1020.8px;width:8px;height:1.2px;background:#333;"></div>
<div class="r" style="left:1867.4px;top:1017.4px;width:1.2px;height:8px;background:#333;"></div>
<span class="t" style="left:1886.00px;top:1013.80px;font-size:11.5px;line-height:15px;letter-spacing:-0.953px;color:#333;">100%</span>
<div class="r" style="left:0px;top:1033px;width:1920px;height:47px;background:#eeeeee;"></div>
<svg class="r" style="left:20px;top:1038px;" width="26" height="32" viewBox="0 0 26 32"><defs><radialGradient id="sun" cx=".4" cy=".35" r=".7"><stop offset="0" stop-color="#ffc83a"/><stop offset="1" stop-color="#f08a1c"/></radialGradient><linearGradient id="cl" x1="0" y1="0" x2="0" y2="1"><stop offset="0" stop-color="#f1f6fd"/><stop offset="1" stop-color="#b9d2f2"/></linearGradient></defs><circle cx="11" cy="14.500" r="10" fill="url(#sun)"/><path d="M6 29.500a4.300 4.300 0 0 1-.5-8.500 5.500 5.500 0 0 1 10.300-1.300A5 5 0 0 1 22 24.500c0 2.800-2 5-4.800 5z" fill="url(#cl)"/></svg>
<svg class="r" style="left:30px;top:1038px;" width="17" height="17" viewBox="0 0 17 17"><circle cx="8.200" cy="8.200" r="8" fill="#c42b1c"/><text x="8.200" y="12.200" font-family="Liberation Sans,sans-serif" font-size="11" fill="#fff" text-anchor="middle">1</text></svg>
<span class="t" style="left:50.70px;top:1040.00px;font-size:12px;line-height:16px;letter-spacing:-0.618px;color:#1b1b1b;">36°F</span>
<span class="t" style="left:50.70px;top:1056.00px;font-size:12px;line-height:16px;letter-spacing:-0.144px;color:#5d5d5d;">Partly sunny</span>
<svg class="r" style="left:550.7px;top:1045px;" width="24" height="24" viewBox="0 0 24 24"><defs><linearGradient id="wn" x1="0" y1="0" x2="1" y2="1"><stop offset="0" stop-color="#35b8f1"/><stop offset="1" stop-color="#0f6fd0"/></linearGradient></defs><rect x="0" y="0" width="11.200" height="11.200" rx="1" fill="url(#wn)"/><rect x="12.300" y="0" width="11.200" height="11.200" rx="1" fill="url(#wn)"/><rect x="0" y="12.300" width="11.200" height="11.200" rx="1" fill="url(#wn)"/><rect x="12.300" y="12.300" width="11.200" height="11.200" rx="1" fill="url(#wn)"/></svg>
<div class="r" style="left:587.5px;top:1040.5px;width:218.5px;height:31px;background:#fafafa;border:1px solid #e2e2e2;border-radius:15.500px;box-shadow:0 1px 1px rgba(0,0,0,.06);"></div>
<svg class="r" style="left:598px;top:1048px;" width="17" height="17" viewBox="0 0 17 17"><circle cx="7" cy="7" r="5.300" fill="none" stroke="#222" stroke-width="1.700"/><path d="M10.800 10.800l4.200 4.200" stroke="#222" stroke-width="1.800" stroke-linecap="round"/></svg>
<span class="t" style="left:624.00px;top:1047.00px;font-size:13.5px;line-height:18px;letter-spacing:-0.295px;color:#5d5d5d;">Search</span>
<svg class="r" style="left:818px;top:1044px;" width="26" height="24" viewBox="0 0 26 24"><defs><linearGradient id="tv" x1="0" y1="1" x2="1" y2="0"><stop offset="0.350" stop-color="#1c1c1c"/><stop offset="1" stop-color="#c9c9c9"/></linearGradient></defs><rect x="7.500" y="1" width="17" height="16" rx="1.500" fill="#fbfbfb" stroke="#e4e4e4"/><rect x="1" y="7" width="18" height="16" rx="1.500" fill="url(#tv)"/></svg>
<svg class="r" style="left:862px;top:1045px;" width="26" height="24" viewBox="0 0 26 24"><path d="M1 3.500a1.500 1.500 0 0 1 1.500-1.500h6l2.500 2.500h12.500a1.500 1.500 0 0 1 1.500 1.500v3H1z" fill="#e8a21c"/><rect x="1" y="5.500" width="24" height="17" rx="1.500" fill="#ffd75e"/><rect x="1" y="14" width="24" height="8.500" rx="1.500" fill="#f9c23c"/><rect x="6.500" y="15.500" width="13" height="5.500" rx="1.500" fill="#1a80d8"/></svg>
<svg class="r" style="left:906px;top:1044px;" width="26" height="26" viewBox="0 0 26 26"><defs><linearGradient id="eg" x1="0" y1="0" x2="1" y2="1"><stop offset="0" stop-color="#35c1f1"/><stop offset=".5" stop-color="#1b9de2"/><stop offset="1" stop-color="#0c59a4"/></linearGradient><linearGradient id="eg2" x1="0" y1="0" x2="1" y2="0"><stop offset="0" stop-color="#3ac47d"/><stop offset="1" stop-color="#7ee05a"/></linearGradient></defs><circle cx="13" cy="13" r="12" fill="url(#eg)"/><path d="M2 10C4 3 10 0.500 15 1.200c6 .8 10 5 10 10.800 0 3-2.500 5-5.500 5-2 0-3.500-.8-3.500-2 0-1 1-1.300 1-3 0-2.500-2.500-4.500-6-4.500-4 0-7 2-9 2.500z" fill="url(#eg2)"/><path d="M10.500 22c-3-2-4-6-2-9.500" fill="none" stroke="#0b4f99" stroke-width="3"/><rect x="1" y="15.500" width="12" height="9" rx="1.500" fill="#b5651d"/><rect x="4.500" y="14" width="5" height="2.500" fill="none" stroke="#8b4a12" stroke-width="1.200"/><rect x="1" y="19" width="12" height="1.500" fill="#e0a04a"/></svg>
<svg class="r" style="left:950px;top:1040px;" width="30" height="30" viewBox="0 0 30 30"><circle cx="9" cy="7.500" r="3.500" fill="#7b83eb"/><circle cx="19" cy="10" r="3" fill="#5059c9"/><rect x="13" y="14" width="11" height="11" rx="3" fill="#5059c9"/><rect x="4" y="12.500" width="13" height="14.500" rx="3" fill="#7b83eb"/><rect x="0.500" y="14.500" width="10" height="10" rx="1.500" fill="#4b53bc"/><text x="5.500" y="22.500" font-family="Liberation Sans,sans-serif" font-weight="bold" font-size="8" fill="#fff" text-anchor="middle">T</text><circle cx="22.500" cy="7" r="6.800" fill="#c50f1f"/></svg>
<svg class="r" style="left:995px;top:1043px;" width="26" height="28" viewBox="0 0 26 28"><path d="M1.500 3l15-1.500 2 14-15 2.500z" fill="#1c5fd0"/><path d="M3 4.300l12.300-1.200 1.600 11.400-12.200 2z" fill="#5aa7f5"/><path d="M3 4.300l6-.6 3 13-7.300 1.200z" fill="#2b7be4"/><path d="M7 19l7-1.200 1 3.500-7 1.500z" fill="#9aa3ad"/><path d="M4 23.500l13-2.500 1.500 2-13 3z" fill="#c4cad1"/><circle cx="18.500" cy="20.500" r="5.800" fill="#e9e9e9" stroke="#9a9a9a" stroke-width=".8"/><path d="M16 19l2.200 1.800L16 22.500M21 19l-2.200 1.800L21 22.500" fill="none" stroke="#2e8b2e" stroke-width="1.300"/></svg>
<svg class="r" style="left:1039px;top:1044px;" width="25" height="25" viewBox="0 0 25 25"><circle cx="12.500" cy="12.500" r="11.300" fill="#fff" stroke="#1565c0" stroke-width="2"/><path d="M19 8.500a7.500 7.500 0 1 0 0 8" fill="none" stroke="#1565c0" stroke-width="2.600"/><path d="M15.500 10.500a3.600 3.600 0 1 0 0 4" fill="none" stroke="#1565c0" stroke-width="1.800"/><path d="M15 12.500h9" stroke="#1565c0" stroke-width="1.600"/></svg>
<svg class="r" style="left:1083px;top:1044px;" width="25" height="25" viewBox="0 0 25 25"><circle cx="12.500" cy="12.500" r="12" fill="#fff"/><path d="M12.500 .5a12 12 0 0 1 10.400 6H12.500a6 6 0 0 0-5.200 3L2.100 6.500A12 12 0 0 1 12.500 .5z" fill="#ea4335"/><path d="M22.900 6.500a12 12 0 0 1-9.600 18l5.200-9a6 6 0 0 0 0-6z" fill="#fbbc04"/><path d="M13.300 24.500A12 12 0 0 1 2.100 6.500l5.200 9a6 6 0 0 0 5.200 3 6 6 0 0 0 6-3z" fill="#34a853"/><path d="M2.100 6.500l5.200 9a6 6 0 0 0 8.200 2.200l-2.200 6.800A12 12 0 0 1 2.100 6.500z" fill="#34a853"/><circle cx="12.500" cy="12.500" r="5.600" fill="#fff"/><circle cx="12.500" cy="12.500" r="4.500" fill="#4285f4"/></svg>
<svg class="r" style="left:1126px;top:1038px;" width="32" height="32" viewBox="0 0 32 32"><path d="M8 12l9-5.500 9 5.500v12a2 2 0 0 1-2 2H10a2 2 0 0 1-2-2z" fill="#1490df"/><path d="M10 9.500h14v10l-7 4-7-4z" fill="#50d9ff"/><path d="M8 14l9 5.500 9-5.500v10a2 2 0 0 1-2 2H10a2 2 0 0 1-2-2z" fill="#0f6cbd"/><path d="M12 26l14-12v10a2 2 0 0 1-2 2z" fill="#28a8ea"/><rect x="1" y="15.500" width="11.500" height="11.500" rx="2" fill="#0f5baa"/><text x="6.800" y="24.600" font-family="Liberation Sans,sans-serif" font-weight="bold" font-size="9" fill="#fff" text-anchor="middle">O</text><circle cx="22.500" cy="8" r="7.500" fill="#4cc2ff"/><rect x="18" y="5" width="9" height="6.300" rx="0.800" fill="none" stroke="#111" stroke-width="1"/><path d="M18.300 5.500l4.200 3 4.200-3" fill="none" stroke="#111" stroke-width="0.900"/></svg>
<svg class="r" style="left:1170px;top:1044px;" width="24" height="25" viewBox="0 0 24 25"><rect x="5" y="1" width="18" height="22" rx="2.500" fill="#ca64ea"/><path d="M14 1h6.500A2.500 2.500 0 0 1 23 3.500V8h-9z" fill="#e7a8f8"/><path d="M14 8h9v7.500h-9z" fill="#b94fe0"/><path d="M5 16h18v4.500a2.500 2.500 0 0 1-2.500 2.500H7.500A2.500 2.500 0 0 1 5 20.500z" fill="#9332bf"/><rect x="0.500" y="10" width="12.500" height="12.500" rx="2" fill="#7719aa"/><text x="6.800" y="19.800" font-family="Liberation Sans,sans-serif" font-weight="bold" font-size="9.500" fill="#fff" text-anchor="middle">N</text></svg>
<svg class="r" style="left:1216px;top:1045px;" width="23" height="23" viewBox="0 0 23 23"><rect x="0.500" y="0.500" width="21.500" height="21.500" rx="5" fill="#3b1a8c"/><path d="M15.500 7.500a5.300 5.300 0 1 0 .8 6.500v-2.800h-4.500" fill="none" stroke="#fff" stroke-width="2.400"/><path d="M14 16l3.500 3" stroke="#f0a0f0" stroke-width="2.200"/><circle cx="5" cy="5" r=".8" fill="#fff"/><circle cx="18" cy="5" r=".7" fill="#fff"/></svg>
<div class="r" style="left:1252px;top:1037px;width:34px;height:38px;background:#f8f8f8;border:1px solid #e6e6e6;border-radius:4px;"></div>
<svg class="r" style="left:1259px;top:1045px;" width="22" height="22" viewBox="0 0 22 22"><rect x="6" y="1" width="15" height="20" rx="2" fill="#21a366"/><path d="M13.500 1h5.500a2 2 0 0 1 2 2v4.500h-7.500z" fill="#33c481"/><path d="M6 7.500h7.500v6H6z" fill="#107c41"/><path d="M13.500 7.500H21v6h-7.500z" fill="#21a366"/><path d="M6 13.500h15V19a2 2 0 0 1-2 2H8a2 2 0 0 1-2-2z" fill="#185c37"/><rect x="0.500" y="6.500" width="10.500" height="10.500" rx="1.500" fill="#107c41"/><text x="5.800" y="15" font-family="Liberation Sans,sans-serif" font-weight="bold" font-size="8.500" fill="#fff" text-anchor="middle">x</text></svg>
<div class="r" style="left:1263px;top:1072px;width:16px;height:3px;background:#0f6cbd;border-radius:1.500px;"></div>
<svg class="r" style="left:1305px;top:1043px;" width="20" height="26" viewBox="0 0 20 26"><rect x="0.500" y="0.500" width="19" height="24.500" rx="1.500" fill="#5b6d7e"/><rect x="2.500" y="2.500" width="15" height="5" fill="#4fd1f3"/><g fill="#dfe5ea"><rect x="2.500" y="9.500" width="4" height="3.800"/><rect x="8" y="9.500" width="4" height="3.800"/><rect x="2.500" y="14.700" width="4" height="3.800"/><rect x="8" y="14.700" width="4" height="3.800"/><rect x="2.500" y="19.900" width="4" height="3.800"/><rect x="8" y="19.900" width="4" height="3.800"/><rect x="13.500" y="9.500" width="4" height="3.800"/></g><rect x="13.500" y="14.700" width="4" height="9" fill="#16589c"/></svg>
<svg class="r" style="left:1348px;top:1045px;" width="23" height="23" viewBox="0 0 23 23"><rect x="0.500" y="0.500" width="21.500" height="21.500" rx="4.500" fill="#b30b00"/><path d="M5 16c3-1 6-5 6.800-10 .2-1.300-1.600-1.400-1.500 0 .4 4 3.500 7.500 6.800 8 1.600.2 1.600-1.400 0-1.400-3.500 0-8.500 1.300-12.100 3.400z" fill="none" stroke="#fff" stroke-width="1.500" stroke-linejoin="round"/></svg>
<div class="r" style="left:871.5px;top:1072.5px;width:6px;height:2.5px;background:#8a8a8a;border-radius:1.250px;"></div>
<div class="r" style="left:915.5px;top:1072.5px;width:6px;height:2.5px;background:#8a8a8a;border-radius:1.250px;"></div>
<div class="r" style="left:959.5px;top:1072.5px;width:6px;height:2.5px;background:#8a8a8a;border-radius:1.250px;"></div>
<div class="r" style="left:1004px;top:1072.5px;width:6px;height:2.5px;background:#8a8a8a;border-radius:1.250px;"></div>
<div class="r" style="left:1091.5px;top:1072.5px;width:6px;height:2.5px;background:#8a8a8a;border-radius:1.250px;"></div>
<div class="r" style="left:1135.5px;top:1072.5px;width:6px;height:2.5px;background:#8a8a8a;border-radius:1.250px;"></div>
<div class="r" style="left:1179.5px;top:1072.5px;width:6px;height:2.5px;background:#8a8a8a;border-radius:1.250px;"></div>
<div class="r" style="left:1223.5px;top:1072.5px;width:6px;height:2.5px;background:#8a8a8a;border-radius:1.250px;"></div>
<div class="r" style="left:1311.5px;top:1072.5px;width:6px;height:2.5px;background:#8a8a8a;border-radius:1.250px;"></div>
<div class="r" style="left:1355.5px;top:1072.5px;width:6px;height:2.5px;background:#8a8a8a;border-radius:1.250px;"></div>
<svg class="r" style="left:1699px;top:1051px;" width="13" height="9" viewBox="0 0 13 9"><path d="M1.200 7.500L6.500 2l5.300 5.500" fill="none" stroke="#222" stroke-width="1.400" stroke-linecap="round" stroke-linejoin="round"/></svg>
<svg class="r" style="left:1730px;top:1047px;" width="15" height="19" viewBox="0 0 15 19"><rect x="4.300" y="1" width="5.400" height="10" rx="2.700" fill="none" stroke="#2a5db8" stroke-width="1.400"/><path d="M1.500 8.500a5.500 5.500 0 0 0 11 0M7 14v3.500" fill="none" stroke="#2f6fcf" stroke-width="1.300" stroke-linecap="round"/></svg>
<svg class="r" style="left:1760px;top:1048px;" width="18" height="15" viewBox="0 0 18 15"><path d="M1 5.500a11.500 11.500 0 0 1 16 0M3.800 8.300a7.500 7.500 0 0 1 10.400 0M6.500 11a3.700 3.700 0 0 1 5 0" fill="none" stroke="#222" stroke-width="1.300" stroke-linecap="round"/><circle cx="9" cy="13.300" r="1.200" fill="#222"/></svg>
<svg class="r" style="left:1784px;top:1048px;" width="18" height="16" viewBox="0 0 18 16"><path d="M1 5.500h3l4-3.500v12l-4-3.500H1z" fill="none" stroke="#222" stroke-width="1.200" stroke-linejoin="round"/><path d="M10.500 5.500a3.500 3.500 0 0 1 0 5M12.800 3.500a6.500 6.500 0 0 1 0 9M15 1.500a9.500 9.500 0 0 1 0 13" fill="none" stroke="#222" stroke-width="1.150" stroke-linecap="round"/></svg>
<svg class="r" style="left:1808px;top:1046px;" width="22" height="17" viewBox="0 0 22 17"><rect x="1" y="5" width="18" height="10.500" rx="2.500" fill="none" stroke="#222" stroke-width="1.200"/><rect x="2.800" y="6.800" width="14.400" height="6.900" rx="1" fill="#107c10"/><path d="M19.800 8.500v3.500" stroke="#222" stroke-width="1.600" stroke-linecap="round"/><path d="M11.500 0.500L7.800 7h2.700l-1.200 4.500L13.500 5h-2.700z" fill="#222" stroke="#eee" stroke-width=".6"/></svg>
<span class="t" style="left:1851.70px;top:1040.70px;font-size:12px;line-height:16px;letter-spacing:-0.320px;color:#1b1b1b;">12:35 PM</span>
<span class="t" style="left:1846.00px;top:1056.50px;font-size:12px;line-height:16px;letter-spacing:0.125px;color:#1b1b1b;">3/24/2026</span>
</body></html>
